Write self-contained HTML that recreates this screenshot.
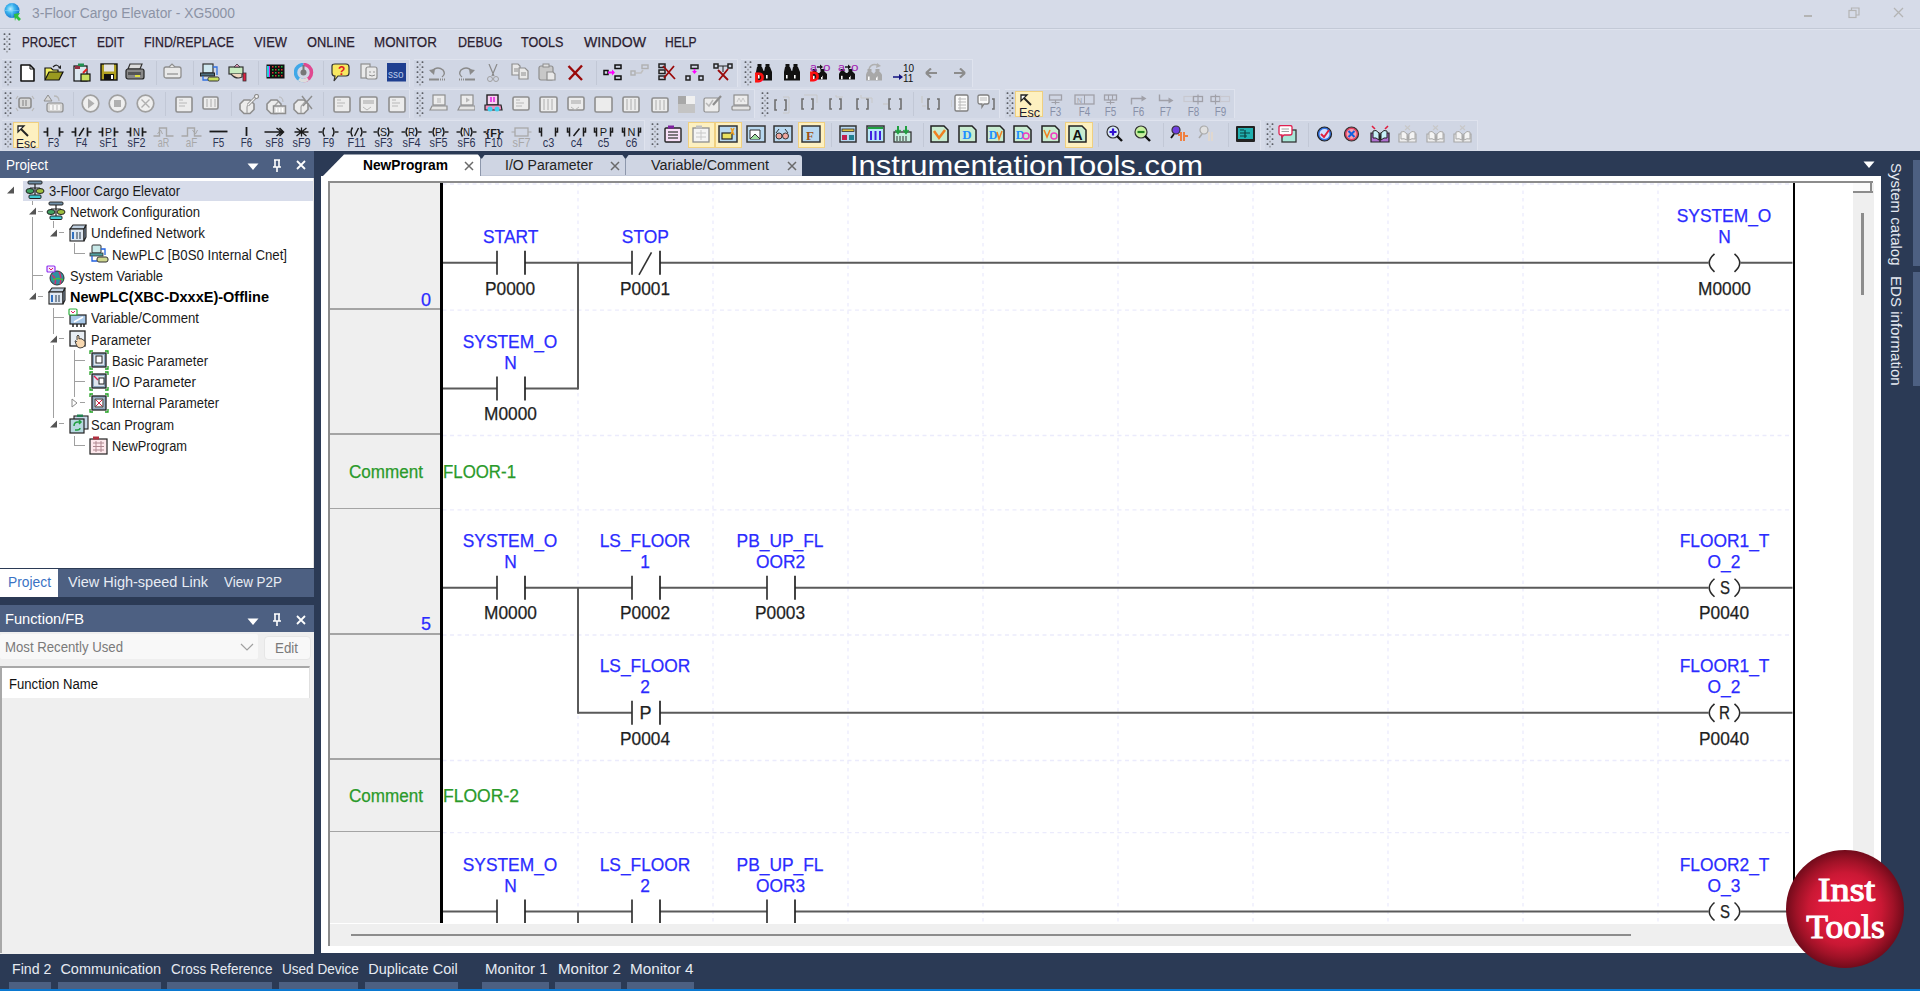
<!DOCTYPE html><html><head><meta charset="utf-8"><style>html,body{margin:0;padding:0}body{width:1920px;height:991px;position:relative;overflow:hidden;background:#d6dbe8;font-family:"Liberation Sans",sans-serif}body>div{position:absolute}</style></head><body>
<svg style="position:absolute;left:3px;top:1px;" width="19" height="21" viewBox="0 0 19 21"><defs><radialGradient id="gl" cx="40%" cy="40%" r="60%"><stop offset="0" stop-color="#bff0ff"/><stop offset="0.45" stop-color="#40b8f0"/><stop offset="1" stop-color="#1878d0"/></radialGradient></defs><circle cx="9" cy="9.5" r="7.5" fill="url(#gl)"/><path d="M9 2 V17 M2 9.5 H16" stroke="#8fd8ff" stroke-width="0.8" opacity="0.6"/><path d="M11 13 L17 12 L15 15 L18 18 L16 20 L13 17 L12 20 Z" fill="#30c040"/></svg>
<div style="left:32.00px;top:5.95px;font-size:14px;line-height:14px;color:#8c93a5;font-weight:normal;font-family:'Liberation Sans',sans-serif;white-space:nowrap;transform:scaleX(0.9882);transform-origin:0 0;">3-Floor Cargo Elevator - XG5000</div>
<div style="left:0px;top:28px;width:1920px;height:1px;background:#c3c9d6;"></div>
<div style="left:0px;top:29px;width:1920px;height:1px;background:#dfe3ee;"></div>
<div style="left:1804px;top:15px;width:8px;height:1.5px;background:#b4b4b4;"></div>
<svg style="position:absolute;left:1848px;top:7px;" width="12" height="12" viewBox="0 0 12 12"><rect x="1" y="3.5" width="7" height="7" fill="none" stroke="#b4b4b4" stroke-width="1.2"/><path d="M3.5 3.5 V1 H11 V8 H8" fill="none" stroke="#b4b4b4" stroke-width="1.2"/></svg>
<svg style="position:absolute;left:1893px;top:7px;" width="11" height="11" viewBox="0 0 11 11"><path d="M1 1 L10 10 M10 1 L1 10" stroke="#b4b4b4" stroke-width="1.3"/></svg>
<svg style="position:absolute;left:3.4px;top:32px;" width="8" height="22" viewBox="0 0 8 22"><rect x="0.6" y="1.3" width="1.8" height="1.8" rx="0.5" fill="#5c5f66"/><rect x="5.6" y="1.3" width="1.8" height="1.8" rx="0.5" fill="#5c5f66"/><rect x="3.1" y="3.8" width="1.8" height="1.8" rx="0.5" fill="#9c9fa6"/><rect x="0.6" y="6.3" width="1.8" height="1.8" rx="0.5" fill="#5c5f66"/><rect x="5.6" y="6.3" width="1.8" height="1.8" rx="0.5" fill="#5c5f66"/><rect x="3.1" y="8.8" width="1.8" height="1.8" rx="0.5" fill="#9c9fa6"/><rect x="0.6" y="11.3" width="1.8" height="1.8" rx="0.5" fill="#5c5f66"/><rect x="5.6" y="11.3" width="1.8" height="1.8" rx="0.5" fill="#5c5f66"/><rect x="3.1" y="13.8" width="1.8" height="1.8" rx="0.5" fill="#9c9fa6"/><rect x="0.6" y="16.3" width="1.8" height="1.8" rx="0.5" fill="#5c5f66"/><rect x="5.6" y="16.3" width="1.8" height="1.8" rx="0.5" fill="#5c5f66"/><rect x="3.1" y="18.8" width="1.8" height="1.8" rx="0.5" fill="#9c9fa6"/></svg>
<div style="left:21.60px;top:34.18px;font-size:15.5px;line-height:15.5px;color:#2b2030;font-weight:normal;font-family:'Liberation Sans',sans-serif;white-space:nowrap;transform:scaleX(0.7561);transform-origin:0 0;-webkit-text-stroke:0.25px currentColor;">PROJECT</div>
<div style="left:96.60px;top:34.18px;font-size:15.5px;line-height:15.5px;color:#2b2030;font-weight:normal;font-family:'Liberation Sans',sans-serif;white-space:nowrap;transform:scaleX(0.7704);transform-origin:0 0;-webkit-text-stroke:0.25px currentColor;">EDIT</div>
<div style="left:144.40px;top:34.18px;font-size:15.5px;line-height:15.5px;color:#2b2030;font-weight:normal;font-family:'Liberation Sans',sans-serif;white-space:nowrap;transform:scaleX(0.7976);transform-origin:0 0;-webkit-text-stroke:0.25px currentColor;">FIND/REPLACE</div>
<div style="left:254.00px;top:34.18px;font-size:15.5px;line-height:15.5px;color:#2b2030;font-weight:normal;font-family:'Liberation Sans',sans-serif;white-space:nowrap;transform:scaleX(0.8331);transform-origin:0 0;-webkit-text-stroke:0.25px currentColor;">VIEW</div>
<div style="left:306.60px;top:34.18px;font-size:15.5px;line-height:15.5px;color:#2b2030;font-weight:normal;font-family:'Liberation Sans',sans-serif;white-space:nowrap;transform:scaleX(0.8283);transform-origin:0 0;-webkit-text-stroke:0.25px currentColor;">ONLINE</div>
<div style="left:374.00px;top:34.18px;font-size:15.5px;line-height:15.5px;color:#2b2030;font-weight:normal;font-family:'Liberation Sans',sans-serif;white-space:nowrap;transform:scaleX(0.8627);transform-origin:0 0;-webkit-text-stroke:0.25px currentColor;">MONITOR</div>
<div style="left:457.50px;top:34.18px;font-size:15.5px;line-height:15.5px;color:#2b2030;font-weight:normal;font-family:'Liberation Sans',sans-serif;white-space:nowrap;transform:scaleX(0.8073);transform-origin:0 0;-webkit-text-stroke:0.25px currentColor;">DEBUG</div>
<div style="left:521.00px;top:34.18px;font-size:15.5px;line-height:15.5px;color:#2b2030;font-weight:normal;font-family:'Liberation Sans',sans-serif;white-space:nowrap;transform:scaleX(0.8113);transform-origin:0 0;-webkit-text-stroke:0.25px currentColor;">TOOLS</div>
<div style="left:584.00px;top:34.18px;font-size:15.5px;line-height:15.5px;color:#2b2030;font-weight:normal;font-family:'Liberation Sans',sans-serif;white-space:nowrap;transform:scaleX(0.9116);transform-origin:0 0;-webkit-text-stroke:0.25px currentColor;">WINDOW</div>
<div style="left:665.00px;top:34.18px;font-size:15.5px;line-height:15.5px;color:#2b2030;font-weight:normal;font-family:'Liberation Sans',sans-serif;white-space:nowrap;transform:scaleX(0.7804);transform-origin:0 0;-webkit-text-stroke:0.25px currentColor;">HELP</div>
<div style="left:2px;top:58.7px;width:408px;height:28.3px;background:#d0d6e4;border-top:1px solid #dfe3ee;border-right:1px solid #dfe3ee;box-sizing:border-box;"></div>
<div style="left:414px;top:58.7px;width:323.5px;height:28.3px;background:#d0d6e4;border-top:1px solid #dfe3ee;border-right:1px solid #dfe3ee;box-sizing:border-box;"></div>
<div style="left:741px;top:58.7px;width:232px;height:28.3px;background:#d0d6e4;border-top:1px solid #dfe3ee;border-right:1px solid #dfe3ee;box-sizing:border-box;"></div>
<div style="left:2px;top:89px;width:408px;height:29px;background:#d0d6e4;border-top:1px solid #dfe3ee;border-right:1px solid #dfe3ee;box-sizing:border-box;"></div>
<div style="left:414px;top:89px;width:341.29999999999995px;height:29px;background:#d0d6e4;border-top:1px solid #dfe3ee;border-right:1px solid #dfe3ee;box-sizing:border-box;"></div>
<div style="left:760px;top:89px;width:240px;height:29px;background:#d0d6e4;border-top:1px solid #dfe3ee;border-right:1px solid #dfe3ee;box-sizing:border-box;"></div>
<div style="left:1005px;top:89px;width:230px;height:29px;background:#d0d6e4;border-top:1px solid #dfe3ee;border-right:1px solid #dfe3ee;box-sizing:border-box;"></div>
<div style="left:2px;top:120.3px;width:643px;height:29.7px;background:#d0d6e4;border-top:1px solid #dfe3ee;border-right:1px solid #dfe3ee;box-sizing:border-box;"></div>
<div style="left:650px;top:120.3px;width:610.5px;height:29.7px;background:#d0d6e4;border-top:1px solid #dfe3ee;border-right:1px solid #dfe3ee;box-sizing:border-box;"></div>
<div style="left:1265px;top:120.3px;width:213.4000000000001px;height:29.7px;background:#d0d6e4;border-top:1px solid #dfe3ee;border-right:1px solid #dfe3ee;box-sizing:border-box;"></div>
<svg style="position:absolute;left:3.5px;top:60px;" width="8" height="26" viewBox="0 0 8 26"><rect x="0.6" y="1.3" width="1.8" height="1.8" rx="0.5" fill="#5c5f66"/><rect x="5.6" y="1.3" width="1.8" height="1.8" rx="0.5" fill="#5c5f66"/><rect x="3.1" y="3.8" width="1.8" height="1.8" rx="0.5" fill="#9c9fa6"/><rect x="0.6" y="6.3" width="1.8" height="1.8" rx="0.5" fill="#5c5f66"/><rect x="5.6" y="6.3" width="1.8" height="1.8" rx="0.5" fill="#5c5f66"/><rect x="3.1" y="8.8" width="1.8" height="1.8" rx="0.5" fill="#9c9fa6"/><rect x="0.6" y="11.3" width="1.8" height="1.8" rx="0.5" fill="#5c5f66"/><rect x="5.6" y="11.3" width="1.8" height="1.8" rx="0.5" fill="#5c5f66"/><rect x="3.1" y="13.8" width="1.8" height="1.8" rx="0.5" fill="#9c9fa6"/><rect x="0.6" y="16.3" width="1.8" height="1.8" rx="0.5" fill="#5c5f66"/><rect x="5.6" y="16.3" width="1.8" height="1.8" rx="0.5" fill="#5c5f66"/><rect x="3.1" y="18.8" width="1.8" height="1.8" rx="0.5" fill="#9c9fa6"/><rect x="0.6" y="21.3" width="1.8" height="1.8" rx="0.5" fill="#5c5f66"/><rect x="5.6" y="21.3" width="1.8" height="1.8" rx="0.5" fill="#5c5f66"/><rect x="3.1" y="23.8" width="1.8" height="1.8" rx="0.5" fill="#9c9fa6"/></svg>
<svg style="position:absolute;left:416px;top:60px;" width="8" height="26" viewBox="0 0 8 26"><rect x="0.6" y="1.3" width="1.8" height="1.8" rx="0.5" fill="#5c5f66"/><rect x="5.6" y="1.3" width="1.8" height="1.8" rx="0.5" fill="#5c5f66"/><rect x="3.1" y="3.8" width="1.8" height="1.8" rx="0.5" fill="#9c9fa6"/><rect x="0.6" y="6.3" width="1.8" height="1.8" rx="0.5" fill="#5c5f66"/><rect x="5.6" y="6.3" width="1.8" height="1.8" rx="0.5" fill="#5c5f66"/><rect x="3.1" y="8.8" width="1.8" height="1.8" rx="0.5" fill="#9c9fa6"/><rect x="0.6" y="11.3" width="1.8" height="1.8" rx="0.5" fill="#5c5f66"/><rect x="5.6" y="11.3" width="1.8" height="1.8" rx="0.5" fill="#5c5f66"/><rect x="3.1" y="13.8" width="1.8" height="1.8" rx="0.5" fill="#9c9fa6"/><rect x="0.6" y="16.3" width="1.8" height="1.8" rx="0.5" fill="#5c5f66"/><rect x="5.6" y="16.3" width="1.8" height="1.8" rx="0.5" fill="#5c5f66"/><rect x="3.1" y="18.8" width="1.8" height="1.8" rx="0.5" fill="#9c9fa6"/><rect x="0.6" y="21.3" width="1.8" height="1.8" rx="0.5" fill="#5c5f66"/><rect x="5.6" y="21.3" width="1.8" height="1.8" rx="0.5" fill="#5c5f66"/><rect x="3.1" y="23.8" width="1.8" height="1.8" rx="0.5" fill="#9c9fa6"/></svg>
<svg style="position:absolute;left:743.5px;top:60px;" width="8" height="26" viewBox="0 0 8 26"><rect x="0.6" y="1.3" width="1.8" height="1.8" rx="0.5" fill="#5c5f66"/><rect x="5.6" y="1.3" width="1.8" height="1.8" rx="0.5" fill="#5c5f66"/><rect x="3.1" y="3.8" width="1.8" height="1.8" rx="0.5" fill="#9c9fa6"/><rect x="0.6" y="6.3" width="1.8" height="1.8" rx="0.5" fill="#5c5f66"/><rect x="5.6" y="6.3" width="1.8" height="1.8" rx="0.5" fill="#5c5f66"/><rect x="3.1" y="8.8" width="1.8" height="1.8" rx="0.5" fill="#9c9fa6"/><rect x="0.6" y="11.3" width="1.8" height="1.8" rx="0.5" fill="#5c5f66"/><rect x="5.6" y="11.3" width="1.8" height="1.8" rx="0.5" fill="#5c5f66"/><rect x="3.1" y="13.8" width="1.8" height="1.8" rx="0.5" fill="#9c9fa6"/><rect x="0.6" y="16.3" width="1.8" height="1.8" rx="0.5" fill="#5c5f66"/><rect x="5.6" y="16.3" width="1.8" height="1.8" rx="0.5" fill="#5c5f66"/><rect x="3.1" y="18.8" width="1.8" height="1.8" rx="0.5" fill="#9c9fa6"/><rect x="0.6" y="21.3" width="1.8" height="1.8" rx="0.5" fill="#5c5f66"/><rect x="5.6" y="21.3" width="1.8" height="1.8" rx="0.5" fill="#5c5f66"/><rect x="3.1" y="23.8" width="1.8" height="1.8" rx="0.5" fill="#9c9fa6"/></svg>
<svg style="position:absolute;left:3.5px;top:91px;" width="8" height="26" viewBox="0 0 8 26"><rect x="0.6" y="1.3" width="1.8" height="1.8" rx="0.5" fill="#5c5f66"/><rect x="5.6" y="1.3" width="1.8" height="1.8" rx="0.5" fill="#5c5f66"/><rect x="3.1" y="3.8" width="1.8" height="1.8" rx="0.5" fill="#9c9fa6"/><rect x="0.6" y="6.3" width="1.8" height="1.8" rx="0.5" fill="#5c5f66"/><rect x="5.6" y="6.3" width="1.8" height="1.8" rx="0.5" fill="#5c5f66"/><rect x="3.1" y="8.8" width="1.8" height="1.8" rx="0.5" fill="#9c9fa6"/><rect x="0.6" y="11.3" width="1.8" height="1.8" rx="0.5" fill="#5c5f66"/><rect x="5.6" y="11.3" width="1.8" height="1.8" rx="0.5" fill="#5c5f66"/><rect x="3.1" y="13.8" width="1.8" height="1.8" rx="0.5" fill="#9c9fa6"/><rect x="0.6" y="16.3" width="1.8" height="1.8" rx="0.5" fill="#5c5f66"/><rect x="5.6" y="16.3" width="1.8" height="1.8" rx="0.5" fill="#5c5f66"/><rect x="3.1" y="18.8" width="1.8" height="1.8" rx="0.5" fill="#9c9fa6"/><rect x="0.6" y="21.3" width="1.8" height="1.8" rx="0.5" fill="#5c5f66"/><rect x="5.6" y="21.3" width="1.8" height="1.8" rx="0.5" fill="#5c5f66"/><rect x="3.1" y="23.8" width="1.8" height="1.8" rx="0.5" fill="#9c9fa6"/></svg>
<svg style="position:absolute;left:416px;top:91px;" width="8" height="26" viewBox="0 0 8 26"><rect x="0.6" y="1.3" width="1.8" height="1.8" rx="0.5" fill="#5c5f66"/><rect x="5.6" y="1.3" width="1.8" height="1.8" rx="0.5" fill="#5c5f66"/><rect x="3.1" y="3.8" width="1.8" height="1.8" rx="0.5" fill="#9c9fa6"/><rect x="0.6" y="6.3" width="1.8" height="1.8" rx="0.5" fill="#5c5f66"/><rect x="5.6" y="6.3" width="1.8" height="1.8" rx="0.5" fill="#5c5f66"/><rect x="3.1" y="8.8" width="1.8" height="1.8" rx="0.5" fill="#9c9fa6"/><rect x="0.6" y="11.3" width="1.8" height="1.8" rx="0.5" fill="#5c5f66"/><rect x="5.6" y="11.3" width="1.8" height="1.8" rx="0.5" fill="#5c5f66"/><rect x="3.1" y="13.8" width="1.8" height="1.8" rx="0.5" fill="#9c9fa6"/><rect x="0.6" y="16.3" width="1.8" height="1.8" rx="0.5" fill="#5c5f66"/><rect x="5.6" y="16.3" width="1.8" height="1.8" rx="0.5" fill="#5c5f66"/><rect x="3.1" y="18.8" width="1.8" height="1.8" rx="0.5" fill="#9c9fa6"/><rect x="0.6" y="21.3" width="1.8" height="1.8" rx="0.5" fill="#5c5f66"/><rect x="5.6" y="21.3" width="1.8" height="1.8" rx="0.5" fill="#5c5f66"/><rect x="3.1" y="23.8" width="1.8" height="1.8" rx="0.5" fill="#9c9fa6"/></svg>
<svg style="position:absolute;left:761px;top:91px;" width="8" height="26" viewBox="0 0 8 26"><rect x="0.6" y="1.3" width="1.8" height="1.8" rx="0.5" fill="#5c5f66"/><rect x="5.6" y="1.3" width="1.8" height="1.8" rx="0.5" fill="#5c5f66"/><rect x="3.1" y="3.8" width="1.8" height="1.8" rx="0.5" fill="#9c9fa6"/><rect x="0.6" y="6.3" width="1.8" height="1.8" rx="0.5" fill="#5c5f66"/><rect x="5.6" y="6.3" width="1.8" height="1.8" rx="0.5" fill="#5c5f66"/><rect x="3.1" y="8.8" width="1.8" height="1.8" rx="0.5" fill="#9c9fa6"/><rect x="0.6" y="11.3" width="1.8" height="1.8" rx="0.5" fill="#5c5f66"/><rect x="5.6" y="11.3" width="1.8" height="1.8" rx="0.5" fill="#5c5f66"/><rect x="3.1" y="13.8" width="1.8" height="1.8" rx="0.5" fill="#9c9fa6"/><rect x="0.6" y="16.3" width="1.8" height="1.8" rx="0.5" fill="#5c5f66"/><rect x="5.6" y="16.3" width="1.8" height="1.8" rx="0.5" fill="#5c5f66"/><rect x="3.1" y="18.8" width="1.8" height="1.8" rx="0.5" fill="#9c9fa6"/><rect x="0.6" y="21.3" width="1.8" height="1.8" rx="0.5" fill="#5c5f66"/><rect x="5.6" y="21.3" width="1.8" height="1.8" rx="0.5" fill="#5c5f66"/><rect x="3.1" y="23.8" width="1.8" height="1.8" rx="0.5" fill="#9c9fa6"/></svg>
<svg style="position:absolute;left:1005.5px;top:91px;" width="8" height="26" viewBox="0 0 8 26"><rect x="0.6" y="1.3" width="1.8" height="1.8" rx="0.5" fill="#5c5f66"/><rect x="5.6" y="1.3" width="1.8" height="1.8" rx="0.5" fill="#5c5f66"/><rect x="3.1" y="3.8" width="1.8" height="1.8" rx="0.5" fill="#9c9fa6"/><rect x="0.6" y="6.3" width="1.8" height="1.8" rx="0.5" fill="#5c5f66"/><rect x="5.6" y="6.3" width="1.8" height="1.8" rx="0.5" fill="#5c5f66"/><rect x="3.1" y="8.8" width="1.8" height="1.8" rx="0.5" fill="#9c9fa6"/><rect x="0.6" y="11.3" width="1.8" height="1.8" rx="0.5" fill="#5c5f66"/><rect x="5.6" y="11.3" width="1.8" height="1.8" rx="0.5" fill="#5c5f66"/><rect x="3.1" y="13.8" width="1.8" height="1.8" rx="0.5" fill="#9c9fa6"/><rect x="0.6" y="16.3" width="1.8" height="1.8" rx="0.5" fill="#5c5f66"/><rect x="5.6" y="16.3" width="1.8" height="1.8" rx="0.5" fill="#5c5f66"/><rect x="3.1" y="18.8" width="1.8" height="1.8" rx="0.5" fill="#9c9fa6"/><rect x="0.6" y="21.3" width="1.8" height="1.8" rx="0.5" fill="#5c5f66"/><rect x="5.6" y="21.3" width="1.8" height="1.8" rx="0.5" fill="#5c5f66"/><rect x="3.1" y="23.8" width="1.8" height="1.8" rx="0.5" fill="#9c9fa6"/></svg>
<svg style="position:absolute;left:3.5px;top:122px;" width="8" height="26" viewBox="0 0 8 26"><rect x="0.6" y="1.3" width="1.8" height="1.8" rx="0.5" fill="#5c5f66"/><rect x="5.6" y="1.3" width="1.8" height="1.8" rx="0.5" fill="#5c5f66"/><rect x="3.1" y="3.8" width="1.8" height="1.8" rx="0.5" fill="#9c9fa6"/><rect x="0.6" y="6.3" width="1.8" height="1.8" rx="0.5" fill="#5c5f66"/><rect x="5.6" y="6.3" width="1.8" height="1.8" rx="0.5" fill="#5c5f66"/><rect x="3.1" y="8.8" width="1.8" height="1.8" rx="0.5" fill="#9c9fa6"/><rect x="0.6" y="11.3" width="1.8" height="1.8" rx="0.5" fill="#5c5f66"/><rect x="5.6" y="11.3" width="1.8" height="1.8" rx="0.5" fill="#5c5f66"/><rect x="3.1" y="13.8" width="1.8" height="1.8" rx="0.5" fill="#9c9fa6"/><rect x="0.6" y="16.3" width="1.8" height="1.8" rx="0.5" fill="#5c5f66"/><rect x="5.6" y="16.3" width="1.8" height="1.8" rx="0.5" fill="#5c5f66"/><rect x="3.1" y="18.8" width="1.8" height="1.8" rx="0.5" fill="#9c9fa6"/><rect x="0.6" y="21.3" width="1.8" height="1.8" rx="0.5" fill="#5c5f66"/><rect x="5.6" y="21.3" width="1.8" height="1.8" rx="0.5" fill="#5c5f66"/><rect x="3.1" y="23.8" width="1.8" height="1.8" rx="0.5" fill="#9c9fa6"/></svg>
<svg style="position:absolute;left:651px;top:122px;" width="8" height="26" viewBox="0 0 8 26"><rect x="0.6" y="1.3" width="1.8" height="1.8" rx="0.5" fill="#5c5f66"/><rect x="5.6" y="1.3" width="1.8" height="1.8" rx="0.5" fill="#5c5f66"/><rect x="3.1" y="3.8" width="1.8" height="1.8" rx="0.5" fill="#9c9fa6"/><rect x="0.6" y="6.3" width="1.8" height="1.8" rx="0.5" fill="#5c5f66"/><rect x="5.6" y="6.3" width="1.8" height="1.8" rx="0.5" fill="#5c5f66"/><rect x="3.1" y="8.8" width="1.8" height="1.8" rx="0.5" fill="#9c9fa6"/><rect x="0.6" y="11.3" width="1.8" height="1.8" rx="0.5" fill="#5c5f66"/><rect x="5.6" y="11.3" width="1.8" height="1.8" rx="0.5" fill="#5c5f66"/><rect x="3.1" y="13.8" width="1.8" height="1.8" rx="0.5" fill="#9c9fa6"/><rect x="0.6" y="16.3" width="1.8" height="1.8" rx="0.5" fill="#5c5f66"/><rect x="5.6" y="16.3" width="1.8" height="1.8" rx="0.5" fill="#5c5f66"/><rect x="3.1" y="18.8" width="1.8" height="1.8" rx="0.5" fill="#9c9fa6"/><rect x="0.6" y="21.3" width="1.8" height="1.8" rx="0.5" fill="#5c5f66"/><rect x="5.6" y="21.3" width="1.8" height="1.8" rx="0.5" fill="#5c5f66"/><rect x="3.1" y="23.8" width="1.8" height="1.8" rx="0.5" fill="#9c9fa6"/></svg>
<svg style="position:absolute;left:1266px;top:122px;" width="8" height="26" viewBox="0 0 8 26"><rect x="0.6" y="1.3" width="1.8" height="1.8" rx="0.5" fill="#5c5f66"/><rect x="5.6" y="1.3" width="1.8" height="1.8" rx="0.5" fill="#5c5f66"/><rect x="3.1" y="3.8" width="1.8" height="1.8" rx="0.5" fill="#9c9fa6"/><rect x="0.6" y="6.3" width="1.8" height="1.8" rx="0.5" fill="#5c5f66"/><rect x="5.6" y="6.3" width="1.8" height="1.8" rx="0.5" fill="#5c5f66"/><rect x="3.1" y="8.8" width="1.8" height="1.8" rx="0.5" fill="#9c9fa6"/><rect x="0.6" y="11.3" width="1.8" height="1.8" rx="0.5" fill="#5c5f66"/><rect x="5.6" y="11.3" width="1.8" height="1.8" rx="0.5" fill="#5c5f66"/><rect x="3.1" y="13.8" width="1.8" height="1.8" rx="0.5" fill="#9c9fa6"/><rect x="0.6" y="16.3" width="1.8" height="1.8" rx="0.5" fill="#5c5f66"/><rect x="5.6" y="16.3" width="1.8" height="1.8" rx="0.5" fill="#5c5f66"/><rect x="3.1" y="18.8" width="1.8" height="1.8" rx="0.5" fill="#9c9fa6"/><rect x="0.6" y="21.3" width="1.8" height="1.8" rx="0.5" fill="#5c5f66"/><rect x="5.6" y="21.3" width="1.8" height="1.8" rx="0.5" fill="#5c5f66"/><rect x="3.1" y="23.8" width="1.8" height="1.8" rx="0.5" fill="#9c9fa6"/></svg>
<div style="left:155.6px;top:61px;width:1px;height:24px;background:#c2c8d6;"></div>
<div style="left:193px;top:61px;width:1px;height:24px;background:#c2c8d6;"></div>
<div style="left:258.3px;top:61px;width:1px;height:24px;background:#c2c8d6;"></div>
<div style="left:323px;top:61px;width:1px;height:24px;background:#c2c8d6;"></div>
<div style="left:595.6px;top:61px;width:1px;height:24px;background:#c2c8d6;"></div>
<div style="left:73.1px;top:92px;width:1px;height:24px;background:#c2c8d6;"></div>
<div style="left:165.4px;top:92px;width:1px;height:24px;background:#c2c8d6;"></div>
<div style="left:230.7px;top:92px;width:1px;height:24px;background:#c2c8d6;"></div>
<div style="left:323px;top:92px;width:1px;height:24px;background:#c2c8d6;"></div>
<div style="left:913.2px;top:92px;width:1px;height:24px;background:#c2c8d6;"></div>
<div style="left:830.7px;top:123px;width:1px;height:24px;background:#c2c8d6;"></div>
<div style="left:923.1px;top:123px;width:1px;height:24px;background:#c2c8d6;"></div>
<div style="left:1098px;top:123px;width:1px;height:24px;background:#c2c8d6;"></div>
<div style="left:1162.9px;top:123px;width:1px;height:24px;background:#c2c8d6;"></div>
<div style="left:1228.1px;top:123px;width:1px;height:24px;background:#c2c8d6;"></div>
<div style="left:1307.8px;top:123px;width:1px;height:24px;background:#c2c8d6;"></div>
<svg style="position:absolute;left:19.7px;top:63.5px;" width="15" height="18" viewBox="0 0 15 18"><path d="M1 1 H10 L14 5 V17 H1 Z" fill="#fff" stroke="#111" stroke-width="1.6" stroke-linejoin="round"/><path d="M10 1 V5 H14" fill="none" stroke="#111" stroke-width="1"/></svg>
<svg style="position:absolute;left:44.4px;top:62.5px;" width="20" height="19" viewBox="0 0 20 19"><path d="M1 5 H7 L9 7 H14 V16 H1 Z" fill="#f2f060" stroke="#111" stroke-width="1.2"/><path d="M1 17 L5 9 H19 L15 17 Z" fill="#9a9a20" stroke="#111" stroke-width="1.2"/><path d="M9 4 Q13 0 16 5" stroke="#222" fill="none" stroke-width="1.2"/><path d="M14 5 L17 6 L17 2" fill="#222"/></svg>
<svg style="position:absolute;left:73.4px;top:62.5px;" width="18" height="19" viewBox="0 0 18 19"><rect x="1" y="3" width="13" height="15" fill="#dce8f0" stroke="#111" stroke-width="1.2"/><rect x="5" y="0.5" width="6" height="3" fill="#209050"/><rect x="2" y="3" width="5" height="3" fill="#903040"/><path d="M10 10 L14 6" stroke="#e02020" stroke-width="2"/><rect x="8" y="11" width="9" height="7" fill="#c8e060" stroke="#111" stroke-width="1.2"/></svg>
<svg style="position:absolute;left:99.6px;top:63.0px;" width="18" height="18" viewBox="0 0 18 18"><rect x="1" y="1" width="16" height="16" fill="#b0a020" stroke="#111" stroke-width="1.4"/><rect x="4" y="1.5" width="10" height="7" fill="#e4e4e4"/><rect x="4" y="11" width="10" height="6" fill="#111"/><rect x="11" y="12" width="2" height="4" fill="#fff"/></svg>
<svg style="position:absolute;left:125.3px;top:62.5px;" width="21" height="19" viewBox="0 0 21 19"><path d="M5 1 H17 L15 6 H3 Z" fill="#ddd" stroke="#333" stroke-width="1.2"/><rect x="1" y="6" width="18" height="10" rx="2" fill="#888" stroke="#222" stroke-width="1.2"/><rect x="3" y="9" width="13" height="3" fill="#555"/><rect x="10" y="12" width="5" height="2" fill="#e0e040"/></svg>
<svg style="position:absolute;left:163.1px;top:62.5px;" width="20" height="18" viewBox="0 0 20 18"><rect x="1" y="4" width="17" height="11" rx="2" fill="#e9e9e9" stroke="#8e8e8e" stroke-width="1.3"/><path d="M6 4 L9 1 L12 4" fill="#e9e9e9" stroke="#8e8e8e" stroke-width="1.2"/><path d="M4 11 H15" stroke="#8e8e8e" stroke-width="1.2"/></svg>
<svg style="position:absolute;left:200.3px;top:62.5px;" width="20" height="19" viewBox="0 0 20 19"><rect x="3" y="1" width="10" height="9" fill="#cfe8f0" stroke="#333" stroke-width="1.2"/><rect x="0.5" y="10" width="14" height="3" fill="#507080" stroke="#222" stroke-width="1"/><path d="M3 13 V17 H8 M13 4 H17 V12" stroke="#3070e0" stroke-width="1.3" fill="none"/><rect x="8" y="14" width="11" height="4" rx="1.5" fill="#c8e060" stroke="#333" stroke-width="1"/></svg>
<svg style="position:absolute;left:227.8px;top:62.5px;" width="20" height="19" viewBox="0 0 20 19"><rect x="1" y="4" width="14" height="7" fill="#c8ecc0" stroke="#333" stroke-width="1.2"/><path d="M6 4 L9 1 L12 4 Z" fill="#e8a0c0" stroke="#333" stroke-width="0.8"/><path d="M3 11 Q8 17 14 14 V11" fill="#f0d8c0" stroke="#333" stroke-width="1.2"/><rect x="15" y="10" width="3" height="8" fill="#e02040" stroke="#333" stroke-width="0.8"/></svg>
<svg style="position:absolute;left:265.5px;top:63.5px;" width="20" height="16" viewBox="0 0 20 16"><rect x="0.5" y="0.5" width="18" height="14" fill="#111"/><rect x="1" y="2" width="3" height="11" fill="#20d0e0"/><rect x="3" y="2" width="1" height="11" fill="#e020e0"/><rect x="6" y="2" width="1.5" height="1.5" fill="#e03030"/><rect x="6" y="5" width="1.5" height="1.5" fill="#20c040"/><rect x="6" y="8" width="1.5" height="1.5" fill="#e03030"/><rect x="6" y="11" width="1.5" height="1.5" fill="#20c040"/><rect x="9" y="2" width="1.5" height="1.5" fill="#20c040"/><rect x="9" y="5" width="1.5" height="1.5" fill="#e03030"/><rect x="9" y="8" width="1.5" height="1.5" fill="#20c040"/><rect x="9" y="11" width="1.5" height="1.5" fill="#e03030"/><rect x="12" y="2" width="1.5" height="1.5" fill="#e03030"/><rect x="12" y="5" width="1.5" height="1.5" fill="#20c040"/><rect x="12" y="8" width="1.5" height="1.5" fill="#e03030"/><rect x="12" y="11" width="1.5" height="1.5" fill="#20c040"/><rect x="15" y="2" width="1.5" height="1.5" fill="#20c040"/><rect x="15" y="5" width="1.5" height="1.5" fill="#e03030"/><rect x="15" y="8" width="1.5" height="1.5" fill="#20c040"/><rect x="15" y="11" width="1.5" height="1.5" fill="#e03030"/></svg>
<svg style="position:absolute;left:293.7px;top:62.5px;" width="20" height="20" viewBox="0 0 20 20"><path d="M9.5 1.5 A8 8 0 0 0 9.5 17.5" stroke="#40a8e8" stroke-width="3.5" fill="none"/><path d="M9.5 1.5 A8 8 0 0 1 9.5 17.5" stroke="#e04890" stroke-width="3.5" fill="none"/><path d="M5 16 A8 8 0 0 0 14 16" stroke="#ddd" stroke-width="3.5" fill="none"/><circle cx="9.5" cy="9.5" r="3" fill="#777"/><rect x="8.5" y="2" width="2" height="6" fill="#777"/></svg>
<svg style="position:absolute;left:330.2px;top:62.5px;" width="20" height="20" viewBox="0 0 20 20"><path d="M2 3 Q2 1 5 1 H16 Q19 1 19 4 V10 Q19 13 16 13 H8 L4 18 L5 13 Q2 13 2 10 Z" fill="#f8e860" stroke="#333" stroke-width="1.2"/><text x="8" y="11.5" font-size="12" font-family="Liberation Sans" fill="#e02020" font-weight="bold">?</text></svg>
<svg style="position:absolute;left:359.5px;top:62.5px;" width="20" height="20" viewBox="0 0 20 20"><rect x="1" y="1" width="9" height="14" fill="#e9e9e9" stroke="#8e8e8e" stroke-width="1.2"/><rect x="6" y="4" width="11" height="12" rx="2" fill="#e9e9e9" stroke="#8e8e8e" stroke-width="1.2"/><circle cx="10" cy="9" r="0.8" fill="#8e8e8e"/><circle cx="14" cy="9" r="0.8" fill="#8e8e8e"/><path d="M9 12 Q12 14 15 12" stroke="#8e8e8e" fill="none"/></svg>
<svg style="position:absolute;left:386.5px;top:62.9px;" width="20" height="20" viewBox="0 0 20 20"><rect x="0" y="0" width="19" height="18.5" fill="#1f3f90"/><text x="1" y="15" font-size="10" font-family="Liberation Sans" fill="#b8c8e8">sso</text></svg>
<svg style="position:absolute;left:428.1px;top:65.1px;" width="20" height="16" viewBox="0 0 20 16"><path d="M3 7 Q9 0 15 5 Q18 9 14 12" stroke="#8a8a8a" stroke-width="1.4" fill="none"/><path d="M1 5 L6 10 L7 4 Z" fill="#8a8a8a"/><rect x="1" y="13.5" width="10" height="2" fill="#8a8a8a"/><rect x="12" y="13.5" width="1" height="2" fill="#8a8a8a"/><rect x="14" y="13.5" width="1" height="2" fill="#8a8a8a"/><rect x="16" y="13.5" width="1" height="2" fill="#8a8a8a"/></svg>
<svg style="position:absolute;left:456.2px;top:65.1px;" width="20" height="16" viewBox="0 0 20 16"><g transform="translate(20,0) scale(-1,1)"><path d="M3 7 Q9 0 15 5 Q18 9 14 12" stroke="#8a8a8a" stroke-width="1.4" fill="none"/><path d="M1 5 L6 10 L7 4 Z" fill="#8a8a8a"/><rect x="1" y="13.5" width="10" height="2" fill="#8a8a8a"/><rect x="12" y="13.5" width="1" height="2" fill="#8a8a8a"/><rect x="14" y="13.5" width="1" height="2" fill="#8a8a8a"/><rect x="16" y="13.5" width="1" height="2" fill="#8a8a8a"/></g></svg>
<svg style="position:absolute;left:486.7px;top:63.5px;" width="12" height="19" viewBox="0 0 12 19"><path d="M2 0 L7 12 M10 0 L5 12" stroke="#8a8a8a" stroke-width="1.2"/><circle cx="3" cy="15" r="2.5" fill="none" stroke="#a0a0a0" stroke-width="1"/><circle cx="9" cy="15" r="2.5" fill="none" stroke="#a0a0a0" stroke-width="1"/></svg>
<svg style="position:absolute;left:510.7px;top:63.0px;" width="20" height="18" viewBox="0 0 20 18"><path d="M1 1 H7 L9 3 V12 H1 Z" fill="#e9e9e9" stroke="#8e8e8e" stroke-width="1.2"/><path d="M8 5 H14 L17 8 V16 H8 Z" fill="#e9e9e9" stroke="#8e8e8e" stroke-width="1.2"/><path d="M10 10 H15 M10 12 H15 M3 6 H7 M3 8 H7" stroke="#8e8e8e"/></svg>
<svg style="position:absolute;left:538.2px;top:62.5px;" width="20" height="19" viewBox="0 0 20 19"><rect x="1" y="3" width="14" height="14" rx="2" fill="#c8c8c8" stroke="#8e8e8e" stroke-width="1.2"/><rect x="5" y="1" width="6" height="3" fill="#e0e0e0" stroke="#8e8e8e"/><path d="M9 9 H15 L17 11 V17 H9 Z" fill="#e9e9e9" stroke="#8e8e8e" stroke-width="1.2"/></svg>
<svg style="position:absolute;left:567.0px;top:64.0px;" width="17" height="18" viewBox="0 0 17 18"><path d="M1.5 2 L15 16 M15 1.5 L2 15.5" stroke="#9a0a0a" stroke-width="2.4"/></svg>
<svg style="position:absolute;left:602.9px;top:63.5px;" width="20" height="18" viewBox="0 0 20 18"><rect x="1" y="6.5" width="4" height="4" fill="none" stroke="#111" stroke-width="1.5"/><rect x="12" y="1" width="6" height="3.5" fill="none" stroke="#111" stroke-width="1.5"/><rect x="12" y="12" width="6" height="3.5" fill="none" stroke="#111" stroke-width="1.5"/><path d="M5 8.5 H11" stroke="#ff00ff" stroke-width="2"/><path d="M9 5.5 L12 8.5 L9 11.5 Z" fill="#ff00ff"/></svg>
<svg style="position:absolute;left:630.3px;top:63.5px;" width="20" height="18" viewBox="0 0 20 18"><rect x="1" y="7" width="4" height="4" fill="none" stroke="#b0b0b0" stroke-width="1.4"/><rect x="12" y="1" width="6" height="3.5" fill="none" stroke="#b0b0b0" stroke-width="1.4"/><path d="M6 9 H11 L13 6" stroke="#c0c0c0" stroke-width="1.6" fill="none"/></svg>
<svg style="position:absolute;left:657.8px;top:62.5px;" width="19" height="19" viewBox="0 0 19 19"><rect x="1" y="1" width="6" height="3.5" fill="none" stroke="#222" stroke-width="1.5"/><rect x="1" y="7" width="6" height="3.5" fill="#ddd" stroke="#222" stroke-width="1.5"/><rect x="1" y="13" width="6" height="3.5" fill="none" stroke="#222" stroke-width="1.5"/><path d="M5 3 L17 16 M16 3 L6 15" stroke="#9a0a0a" stroke-width="1.8"/></svg>
<svg style="position:absolute;left:685.4px;top:63.5px;" width="20" height="18" viewBox="0 0 20 18"><rect x="6" y="1" width="7" height="3.5" fill="none" stroke="#222" stroke-width="1.5"/><rect x="1" y="12" width="4" height="4" fill="none" stroke="#222" stroke-width="1.5"/><rect x="14" y="12" width="4" height="4" fill="none" stroke="#222" stroke-width="1.5"/><path d="M9.5 5 V9" stroke="#ff00ff" stroke-width="1.6"/><path d="M7 7 L9.5 10 L12 7 Z" fill="#ff00ff"/></svg>
<svg style="position:absolute;left:712.9px;top:62.5px;" width="21" height="19" viewBox="0 0 21 19"><rect x="1" y="1" width="4" height="4" fill="none" stroke="#222" stroke-width="1.5"/><rect x="15" y="1" width="4" height="4" fill="none" stroke="#222" stroke-width="1.5"/><path d="M5 3 H15 M10 3 V9" stroke="#222" stroke-width="1"/><path d="M5 7 L15 17 M15 6 L6 17" stroke="#9a0a0a" stroke-width="1.8"/></svg>
<svg style="position:absolute;left:754.5px;top:62.5px;" width="21" height="20" viewBox="0 0 21 20"><rect x="2.5" y="1" width="4" height="3" fill="#111"/><path d="M2 4 H7 L9 9.0 V17.5 H1 V9.0 Z" fill="#111"/><rect x="3" y="12.0" width="1.6" height="3.5" fill="#fff"/><rect x="10.5" y="1" width="4" height="3" fill="#111"/><path d="M10 4 H15 L17 9.0 V17.5 H9 V9.0 Z" fill="#111"/><rect x="11" y="12.0" width="1.6" height="3.5" fill="#fff"/><rect x="6" y="8.0" width="6" height="4" fill="#111"/><text x="-0.5" y="18.5" font-size="12.5" font-weight="bold" font-family="Liberation Sans" fill="#ff1010" stroke="#ff1010" stroke-width="0.8">D</text></svg>
<svg style="position:absolute;left:782.5px;top:62.5px;" width="21" height="20" viewBox="0 0 21 20"><rect x="2.5" y="1" width="4" height="3" fill="#111"/><path d="M2 4 H7 L9 9.0 V17.5 H1 V9.0 Z" fill="#111"/><rect x="3" y="12.0" width="1.6" height="3.5" fill="#fff"/><rect x="10.5" y="1" width="4" height="3" fill="#111"/><path d="M10 4 H15 L17 9.0 V17.5 H9 V9.0 Z" fill="#111"/><rect x="11" y="12.0" width="1.6" height="3.5" fill="#fff"/><rect x="6" y="8.0" width="6" height="4" fill="#111"/></svg>
<svg style="position:absolute;left:809.5px;top:61.5px;" width="21" height="21" viewBox="0 0 21 21"><rect x="2.5" y="7" width="4" height="3" fill="#111"/><path d="M2 10 H7 L9 12.0 V17.5 H1 V12.0 Z" fill="#111"/><rect x="3" y="13.8" width="1.6" height="3.5" fill="#fff"/><rect x="10.5" y="7" width="4" height="3" fill="#111"/><path d="M10 10 H15 L17 12.0 V17.5 H9 V12.0 Z" fill="#111"/><rect x="11" y="13.8" width="1.6" height="3.5" fill="#fff"/><rect x="6" y="11.0" width="6" height="4" fill="#111"/><text x="-0.5" y="18.5" font-size="12.5" font-weight="bold" font-family="Liberation Sans" fill="#ff1010" stroke="#ff1010" stroke-width="0.8">D</text><text x="0" y="8.5" font-size="11" font-family="Liberation Sans" fill="#a020b0" textLength="7" lengthAdjust="spacingAndGlyphs">a</text><text x="13" y="8.5" font-size="11" font-family="Liberation Sans" fill="#a020b0" textLength="7.5" lengthAdjust="spacingAndGlyphs">o</text><path d="M7 5 H11" stroke="#111" stroke-width="1.4"/><path d="M10 2.5 L13 5 L10 7.5Z" fill="#111"/></svg>
<svg style="position:absolute;left:837.5px;top:61.5px;" width="22" height="21" viewBox="0 0 22 21"><rect x="2.5" y="7" width="4" height="3" fill="#111"/><path d="M2 10 H7 L9 12.0 V17.5 H1 V12.0 Z" fill="#111"/><rect x="3" y="13.8" width="1.6" height="3.5" fill="#fff"/><rect x="10.5" y="7" width="4" height="3" fill="#111"/><path d="M10 10 H15 L17 12.0 V17.5 H9 V12.0 Z" fill="#111"/><rect x="11" y="13.8" width="1.6" height="3.5" fill="#fff"/><rect x="6" y="11.0" width="6" height="4" fill="#111"/><text x="0" y="8.5" font-size="11" font-family="Liberation Sans" fill="#a020b0" textLength="7" lengthAdjust="spacingAndGlyphs">a</text><text x="13" y="8.5" font-size="11" font-family="Liberation Sans" fill="#a020b0" textLength="7.5" lengthAdjust="spacingAndGlyphs">o</text><path d="M7 5 H11" stroke="#111" stroke-width="1.4"/><path d="M10 2.5 L13 5 L10 7.5Z" fill="#111"/></svg>
<svg style="position:absolute;left:865.0px;top:62.5px;" width="20" height="20" viewBox="0 0 20 20"><rect x="2.5" y="6" width="4" height="3" fill="#a8a8a8"/><path d="M2 9 H7 L9 11.5 V17.5 H1 V11.5 Z" fill="#a8a8a8"/><rect x="3" y="13.5" width="1.6" height="3.5" fill="#fff"/><rect x="10.5" y="6" width="4" height="3" fill="#a8a8a8"/><path d="M10 9 H15 L17 11.5 V17.5 H9 V11.5 Z" fill="#a8a8a8"/><rect x="11" y="13.5" width="1.6" height="3.5" fill="#fff"/><rect x="6" y="10.5" width="6" height="4" fill="#a8a8a8"/><path d="M4 6 Q6 0 13 2" stroke="#b0b0b0" stroke-width="1.5" fill="none"/><path d="M12 0 L16 3 L11 5 Z" fill="#b0b0b0"/></svg>
<svg style="position:absolute;left:893.0px;top:62.5px;" width="22" height="20" viewBox="0 0 22 20"><text x="10" y="8.5" font-size="10" font-family="Liberation Sans" fill="#111">10</text><text x="10" y="18.5" font-size="10" font-family="Liberation Sans" fill="#111">11</text><path d="M0 14 H8" stroke="#101080" stroke-width="1.5"/><path d="M6 11 L10 14 L6 17 Z" fill="#101080"/></svg>
<svg style="position:absolute;left:924.7px;top:67.5px;" width="14" height="11" viewBox="0 0 14 11"><path d="M1 5 L6 0.5 M1 5 L6 9.5 M1 5 H12" stroke="#8c8c8c" stroke-width="2.2" fill="none"/></svg>
<svg style="position:absolute;left:951.7px;top:67.5px;" width="14" height="11" viewBox="0 0 14 11"><g transform="translate(14,0) scale(-1,1)"><path d="M1 5 L6 0.5 M1 5 L6 9.5 M1 5 H12" stroke="#8c8c8c" stroke-width="2.2" fill="none"/></g></svg>
<svg style="position:absolute;left:15.4px;top:93.8px;" width="21" height="20" viewBox="0 0 21 20"><rect x="4" y="4" width="12" height="10" rx="2" fill="#d8d8d8" stroke="#8e8e8e" stroke-width="1.6"/><path d="M8 6 V12 M11 6 V12" stroke="#8e8e8e" stroke-width="1.2"/><path d="M1 5 L3 2 M19 5 L17 2 M1 14 L3 17 M19 14 L17 17" stroke="#b8b8b8" stroke-width="1.2"/></svg>
<svg style="position:absolute;left:43.3px;top:93.5px;" width="21" height="20" viewBox="0 0 21 20"><path d="M1 7 L5 1 L9 7 Z" fill="#d8d8d8" stroke="#8e8e8e"/><path d="M11 2 Q16 2 16 7" stroke="#b8b8b8" fill="none" stroke-width="1.3"/><rect x="4" y="9" width="16" height="9" rx="2" fill="#d8d8d8" stroke="#8e8e8e" stroke-width="1.2"/><path d="M8 11 V16 M12 11 V16 M16 11 V16" stroke="#fff" stroke-width="1.5"/></svg>
<svg style="position:absolute;left:80.5px;top:93.5px;" width="20" height="20" viewBox="0 0 20 20"><circle cx="9.5" cy="9.5" r="8.3" fill="#efefef" stroke="#a0a0a0" stroke-width="1.7"/><path d="M7 4.5 L13.5 9.5 L7 14.5 Z" fill="#b0b0b0"/></svg>
<svg style="position:absolute;left:108.4px;top:93.5px;" width="20" height="20" viewBox="0 0 20 20"><circle cx="9.5" cy="9.5" r="8.3" fill="#efefef" stroke="#a0a0a0" stroke-width="1.7"/><rect x="6" y="6" width="7" height="7" fill="#b0b0b0"/></svg>
<svg style="position:absolute;left:135.7px;top:93.5px;" width="20" height="20" viewBox="0 0 20 20"><circle cx="9.5" cy="9.5" r="8.3" fill="#efefef" stroke="#a0a0a0" stroke-width="1.7"/><path d="M5.5 5.5 L13.5 13.5 M13.5 5.5 L5.5 13.5" stroke="#b0b0b0" stroke-width="1.4"/></svg>
<svg style="position:absolute;left:173.5px;top:93.5px;" width="20" height="20" viewBox="0 0 20 20"><rect x="2" y="3" width="16" height="15" rx="1.5" fill="#ececec" stroke="#8e8e8e" stroke-width="1.6"/><path d="M5 6 H9 M5 9 H13 M5 12 H11" stroke="#b8b8b8" stroke-width="1.2"/></svg>
<svg style="position:absolute;left:200.9px;top:93.9px;" width="19" height="17" viewBox="0 0 19 17"><rect x="2" y="3" width="15" height="12" rx="1.5" fill="#ececec" stroke="#8e8e8e" stroke-width="1.6"/><path d="M6 5 V13 M10 5 V13 M14 5 V13" stroke="#b8b8b8" stroke-width="1.2"/></svg>
<svg style="position:absolute;left:238.5px;top:93.5px;" width="21" height="21" viewBox="0 0 21 21"><path d="M5 6 L11 6 L15 10 L15 15.5 L11 19.5 L5 19.5 L1 15.5 L1 10 Z" fill="#ececec" stroke="#8e8e8e" stroke-width="1.6"/><path d="M8 12.5 V19 M8 12.5 L12 8" stroke="#a8a8a8" stroke-width="1.3"/><path d="M9 11 L17 3" stroke="#8e8e8e" stroke-width="3"/><path d="M9 11 L17 3" stroke="#f4f4f4" stroke-width="1.2"/><circle cx="17.5" cy="2.5" r="2" fill="#f4f4f4" stroke="#8e8e8e" stroke-width="1.2"/></svg>
<svg style="position:absolute;left:265.5px;top:93.5px;" width="21" height="21" viewBox="0 0 21 21"><path d="M5 6 L11 6 L15 10 L15 15.5 L11 19.5 L5 19.5 L1 15.5 L1 10 Z" fill="#ececec" stroke="#8e8e8e" stroke-width="1.6"/><path d="M8 12.5 V19 M8 12.5 L12 8" stroke="#a8a8a8" stroke-width="1.3"/><rect x="7.5" y="12" width="12" height="7.5" fill="#e4e4e4" stroke="#8e8e8e" stroke-width="1.5"/><path d="M10.5 14 V18 M13.5 14 V18 M16.5 14 V18" stroke="#fff" stroke-width="1.3"/><path d="M13 3 Q17 3 17 8" stroke="#b8b8b8" fill="none"/></svg>
<svg style="position:absolute;left:293.1px;top:93.5px;" width="21" height="21" viewBox="0 0 21 21"><path d="M5 6 L11 6 L15 10 L15 15.5 L11 19.5 L5 19.5 L1 15.5 L1 10 Z" fill="#ececec" stroke="#8e8e8e" stroke-width="1.6"/><path d="M8 12.5 V19 M8 12.5 L12 8" stroke="#a8a8a8" stroke-width="1.3"/><path d="M9 2 L19 15 M19 2 L10 12" stroke="#8e8e8e" stroke-width="1.4"/></svg>
<svg style="position:absolute;left:332.0px;top:93.5px;" width="20" height="20" viewBox="0 0 20 20"><rect x="2" y="3" width="16" height="15" rx="1.5" fill="#ececec" stroke="#8e8e8e" stroke-width="1.6"/><path d="M5 6 H9 M5 9 H13 M5 12 H11" stroke="#b8b8b8" stroke-width="1.2"/></svg>
<svg style="position:absolute;left:358.4px;top:93.5px;" width="21" height="20" viewBox="0 0 21 20"><rect x="2" y="3" width="17" height="15" rx="1.5" fill="#ececec" stroke="#8e8e8e" stroke-width="1.6"/><rect x="5" y="6" width="11" height="4" fill="#c8c8c8"/><path d="M5 13 L9 16 L13 13" stroke="#b8b8b8" fill="none"/></svg>
<svg style="position:absolute;left:386.5px;top:93.5px;" width="20" height="20" viewBox="0 0 20 20"><rect x="2" y="3" width="16" height="15" rx="1.5" fill="#ececec" stroke="#8e8e8e" stroke-width="1.6"/><path d="M5 6 H9 M5 9 H13 M5 12 H11" stroke="#b8b8b8" stroke-width="1.2"/></svg>
<svg style="position:absolute;left:428.7px;top:93.9px;" width="21" height="17" viewBox="0 0 21 17"><rect x="4" y="1" width="12" height="10" fill="#ececec" stroke="#8e8e8e" stroke-width="1.2"/><path d="M1 16 L3 12 H18 V16 Z" fill="#e4e4e4" stroke="#8e8e8e" stroke-width="1.2"/><path d="M9 4 V9 M11 4 V9" stroke="#c0c0c0" stroke-width="1.2"/></svg>
<svg style="position:absolute;left:456.8px;top:93.9px;" width="18" height="17" viewBox="0 0 18 17"><rect x="4" y="1" width="12" height="10" fill="#ececec" stroke="#8e8e8e" stroke-width="1.2"/><path d="M1 16 L3 12 H18 V16 Z" fill="#e4e4e4" stroke="#8e8e8e" stroke-width="1.2"/><path d="M9 3.5 L13 6 L9 8.5 Z" fill="#b8b8b8"/></svg>
<svg style="position:absolute;left:484.4px;top:93.5px;" width="20" height="20" viewBox="0 0 20 20"><rect x="3" y="1" width="11" height="10" fill="#f8d0f0" stroke="#222" stroke-width="1.4"/><path d="M7 3 V8 M10 3 V8" stroke="#e020e0" stroke-width="1.5"/><path d="M1 11 H17 L18 16 H1 Z" fill="#f090c0" stroke="#222" stroke-width="1.2"/><circle cx="6" cy="15" r="2.5" fill="#40d0f0"/><circle cx="13" cy="15" r="2.5" fill="#40d0f0"/></svg>
<svg style="position:absolute;left:510.7px;top:93.5px;" width="20" height="18" viewBox="0 0 20 18"><rect x="2" y="3" width="16" height="13" rx="1.5" fill="#ececec" stroke="#8e8e8e" stroke-width="1.6"/><path d="M5 6 H9 M5 9 H13 M5 12 H11" stroke="#b8b8b8" stroke-width="1.2"/></svg>
<svg style="position:absolute;left:538.2px;top:93.5px;" width="21" height="20" viewBox="0 0 21 20"><rect x="2" y="3" width="17" height="15" rx="1.5" fill="#ececec" stroke="#8e8e8e" stroke-width="1.6"/><path d="M6 5 V16 M10 5 V16 M14 5 V16" stroke="#b8b8b8" stroke-width="1.2"/></svg>
<svg style="position:absolute;left:565.8px;top:93.5px;" width="20" height="18" viewBox="0 0 20 18"><rect x="2" y="3" width="16" height="13" rx="1.5" fill="#ececec" stroke="#8e8e8e" stroke-width="1.6"/><rect x="5" y="6" width="10" height="4" fill="#c8c8c8"/><path d="M5 13 L9 16 L13 13" stroke="#b8b8b8" fill="none"/></svg>
<svg style="position:absolute;left:592.7px;top:93.5px;" width="21" height="20" viewBox="0 0 21 20"><rect x="2" y="3" width="17" height="15" rx="1.5" fill="#ececec" stroke="#8e8e8e" stroke-width="1.6"/></svg>
<svg style="position:absolute;left:621.3px;top:93.5px;" width="20" height="20" viewBox="0 0 20 20"><rect x="2" y="3" width="16" height="15" rx="1.5" fill="#ececec" stroke="#8e8e8e" stroke-width="1.6"/><path d="M6 5 V16 M10 5 V16 M14 5 V16" stroke="#b8b8b8" stroke-width="1.2"/></svg>
<svg style="position:absolute;left:649.5px;top:94.5px;" width="20" height="19" viewBox="0 0 20 19"><rect x="2" y="3" width="16" height="14" rx="1.5" fill="#ececec" stroke="#8e8e8e" stroke-width="1.6"/><path d="M6 5 V15 M10 5 V15 M14 5 V15" stroke="#b8b8b8" stroke-width="1.2"/></svg>
<svg style="position:absolute;left:677.0px;top:94.5px;" width="20" height="19" viewBox="0 0 20 19"><rect x="1" y="1" width="8" height="8" fill="#a8a8a8"/><rect x="9" y="1" width="9" height="8" fill="#f0f0f0"/><rect x="1" y="9" width="17" height="9" fill="#c4c4c4"/></svg>
<svg style="position:absolute;left:703.3px;top:93.5px;" width="21" height="20" viewBox="0 0 21 20"><rect x="1" y="4" width="15" height="14" rx="1.5" fill="#ececec" stroke="#8e8e8e" stroke-width="1.2"/><path d="M3 9 L6 12 L10 6" stroke="#b8b8b8" stroke-width="1.5" fill="none"/><path d="M10 11 L18 2" stroke="#8e8e8e" stroke-width="2.2"/></svg>
<svg style="position:absolute;left:730.9px;top:93.5px;" width="20" height="18" viewBox="0 0 20 18"><rect x="3" y="1" width="14" height="10" fill="#ececec" stroke="#8e8e8e" stroke-width="1.2"/><path d="M6 8 L8 4 L10 8 L12 4 L14 8" stroke="#c8c8c8" fill="none"/><rect x="1" y="12" width="18" height="4" rx="1" fill="#e4e4e4" stroke="#8e8e8e" stroke-width="1.2"/></svg>
<svg style="position:absolute;left:772.8px;top:94.5px;" width="19" height="19" viewBox="0 0 19 19"><path d="M4 5 H2 V15 H4 M11 5 H13 V15 H11" stroke="#707070" stroke-width="1.6" fill="none"/><path d="M10 2 H16 V18 H10" stroke="#c8c8c8" fill="none" stroke-width="1"/></svg>
<svg style="position:absolute;left:800.3px;top:93.5px;" width="19" height="20" viewBox="0 0 19 20"><path d="M4 5 H2 V15 H4 M11 5 H13 V15 H11" stroke="#707070" stroke-width="1.6" fill="none"/><path d="M4 1 H17 V9" stroke="#c8c8c8" fill="none" stroke-width="1"/></svg>
<svg style="position:absolute;left:827.9px;top:93.5px;" width="17" height="20" viewBox="0 0 17 20"><path d="M4 5 H2 V15 H4 M11 5 H13 V15 H11" stroke="#707070" stroke-width="1.6" fill="none"/><path d="M8 1 V3 H15" stroke="#c8c8c8" fill="none" stroke-width="1"/></svg>
<svg style="position:absolute;left:855.2px;top:93.5px;" width="20" height="20" viewBox="0 0 20 20"><path d="M4 5 H2 V15 H4 M11 5 H13 V15 H11" stroke="#707070" stroke-width="1.6" fill="none"/><path d="M6 1 V4 H17 V9" stroke="#c8c8c8" fill="none" stroke-width="1"/></svg>
<svg style="position:absolute;left:883.4px;top:93.5px;" width="20" height="20" viewBox="0 0 20 20"><path d="M8 5 H6 V15 H8 M16 5 H18 V15 H16" stroke="#707070" stroke-width="1.6" fill="none"/><path d="M0 10 H5" stroke="#c8c8c8" stroke-width="1.2"/></svg>
<svg style="position:absolute;left:920.5px;top:93.5px;" width="20" height="20" viewBox="0 0 20 20"><path d="M9 5 H7 V15 H9 M16 5 H18 V15 H16" stroke="#707070" stroke-width="1.6" fill="none"/><path d="M1 2 V9 M1 12 H5" stroke="#c8c8c8" stroke-width="1.2"/></svg>
<svg style="position:absolute;left:950.5px;top:93.5px;" width="18" height="20" viewBox="0 0 18 20"><rect x="4" y="1" width="13" height="16" rx="1.5" fill="#fafafa" stroke="#808080" stroke-width="1.4"/><path d="M7 5 H15 M7 8 H15 M7 11 H15 M7 14 H15 M9 3 V16" stroke="#b8b8b8" stroke-width="1"/><path d="M0 6 V13" stroke="#c8c8c8" stroke-width="1.5"/></svg>
<svg style="position:absolute;left:976.8px;top:93.5px;" width="19" height="20" viewBox="0 0 19 20"><path d="M1 2 Q1 1 3 1 H10 Q12 1 12 3 V8 Q12 10 10 10 H7 L5 13 V10 H3 Q1 10 1 8 Z" fill="#fafafa" stroke="#808080" stroke-width="1.3"/><path d="M3 4 H10 M3 6 H10" stroke="#b8b8b8"/><path d="M15 5 H17 V15 H15" stroke="#707070" stroke-width="1.5" fill="none"/></svg>
<div style="left:1015px;top:91px;width:27.59999999999991px;height:26.400000000000006px;background:#fdf0c0;border:1px solid #f0d080;box-sizing:border-box;"></div>
<div style="left:12.6px;top:122.2px;width:26.9px;height:26.299999999999997px;background:#fdf0c0;border:1px solid #f0d080;box-sizing:border-box;"></div>
<div style="left:687.5px;top:122.2px;width:27.0px;height:26.299999999999997px;background:#fdf0c0;border:1px solid #f0d080;box-sizing:border-box;"></div>
<div style="left:715px;top:122.2px;width:27px;height:26.299999999999997px;background:#fdf0c0;border:1px solid #f0d080;box-sizing:border-box;"></div>
<div style="left:797.7px;top:122.2px;width:27.0px;height:26.299999999999997px;background:#fdf0c0;border:1px solid #f0d080;box-sizing:border-box;"></div>
<div style="left:1065px;top:122.2px;width:27.59999999999991px;height:26.299999999999997px;background:#fdf0c0;border:1px solid #f0d080;box-sizing:border-box;"></div>
<svg style="position:absolute;left:14.0px;top:123.5px;" width="24" height="24" viewBox="0 0 24 24"><path d="M14 12 L6 4" stroke="#222" stroke-width="2"/><path d="M4 2 H10 L4 8 Z" fill="#fff" stroke="#222" stroke-width="1.3" stroke-linejoin="miter"/><text x="12.0" y="23.5" font-size="13" font-family="Liberation Sans" fill="#1a1a30" text-anchor="middle" textLength="20" lengthAdjust="spacingAndGlyphs">Esc</text></svg>
<svg style="position:absolute;left:1016.5px;top:92.5px;" width="25" height="24" viewBox="0 0 25 24"><path d="M14 12 L6 4" stroke="#222" stroke-width="2"/><path d="M4 2 H10 L4 8 Z" fill="#fff" stroke="#222" stroke-width="1.3" stroke-linejoin="miter"/><text x="12.5" y="23.5" font-size="13" font-family="Liberation Sans" fill="#1a1a30" text-anchor="middle" textLength="21" lengthAdjust="spacingAndGlyphs">Esc</text></svg>
<svg style="position:absolute;left:43.1px;top:126px;" width="21" height="22.5" viewBox="0 0 21 22.5"><g transform="translate(0.5,1)"><path d="M0 5 H4 M4 0.5 V9.5 M16 0.5 V9.5 M16 5 H20" stroke="#1a1a1a" stroke-width="1.7" fill="none"/></g><text x="10.5" y="21.2" font-size="12.6" font-family="Liberation Sans" fill="#2c3352" text-anchor="middle" textLength="11.5" lengthAdjust="spacingAndGlyphs">F3</text></svg>
<svg style="position:absolute;left:70.7px;top:126px;" width="21" height="22.5" viewBox="0 0 21 22.5"><g transform="translate(0.5,1)"><path d="M0 5 H4 M4 0.5 V9.5 M16 0.5 V9.5 M16 5 H20" stroke="#1a1a1a" stroke-width="1.7" fill="none"/><path d="M7.5 9 L12.5 1" stroke="#1a1a1a" stroke-width="1.5"/></g><text x="10.5" y="21.2" font-size="12.6" font-family="Liberation Sans" fill="#2c3352" text-anchor="middle" textLength="11.5" lengthAdjust="spacingAndGlyphs">F4</text></svg>
<svg style="position:absolute;left:98.2px;top:126px;" width="21" height="22.5" viewBox="0 0 21 22.5"><g transform="translate(0.5,1)"><path d="M0 5 H4 M4 0.5 V9.5 M16 0.5 V9.5 M16 5 H20" stroke="#1a1a1a" stroke-width="1.7" fill="none"/><text x="10" y="9.3" font-size="11.5" font-family="Liberation Sans" fill="#1a1a1a" text-anchor="middle" textLength="7" lengthAdjust="spacingAndGlyphs">P</text></g><text x="10.5" y="21.2" font-size="12.6" font-family="Liberation Sans" fill="#2c3352" text-anchor="middle" textLength="18" lengthAdjust="spacingAndGlyphs">sF1</text></svg>
<svg style="position:absolute;left:125.7px;top:126px;" width="21" height="22.5" viewBox="0 0 21 22.5"><g transform="translate(0.5,1)"><path d="M0 5 H4 M4 0.5 V9.5 M16 0.5 V9.5 M16 5 H20" stroke="#1a1a1a" stroke-width="1.7" fill="none"/><text x="10" y="9.3" font-size="11.5" font-family="Liberation Sans" fill="#1a1a1a" text-anchor="middle" textLength="7" lengthAdjust="spacingAndGlyphs">N</text></g><text x="10.5" y="21.2" font-size="12.6" font-family="Liberation Sans" fill="#2c3352" text-anchor="middle" textLength="18" lengthAdjust="spacingAndGlyphs">sF2</text></svg>
<svg style="position:absolute;left:153.3px;top:126px;" width="21" height="22.5" viewBox="0 0 21 22.5"><g transform="translate(0.5,1)"><path d="M0 9 H6 V1 H13 V9 H20" stroke="#a8a8a8" stroke-width="1.4" fill="none"/><path d="M4 7 L7 3 L9 7" stroke="#a8a8a8" fill="none"/></g><text x="10.5" y="21.2" font-size="12.6" font-family="Liberation Sans" fill="#a8a8a8" text-anchor="middle" textLength="11.5" lengthAdjust="spacingAndGlyphs">aR</text></svg>
<svg style="position:absolute;left:180.5px;top:126px;" width="21" height="22.5" viewBox="0 0 21 22.5"><g transform="translate(0.5,1)"><path d="M0 9 H6 V1 H13 V9 H20" stroke="#a8a8a8" stroke-width="1.4" fill="none"/><path d="M11 3 L14 7 L16 3" stroke="#a8a8a8" fill="none"/></g><text x="10.5" y="21.2" font-size="12.6" font-family="Liberation Sans" fill="#a8a8a8" text-anchor="middle" textLength="11.5" lengthAdjust="spacingAndGlyphs">aF</text></svg>
<svg style="position:absolute;left:207.5px;top:126px;" width="21" height="22.5" viewBox="0 0 21 22.5"><g transform="translate(0.5,1)"><path d="M1 4.5 H19" stroke="#1a1a1a" stroke-width="1.8"/></g><text x="10.5" y="21.2" font-size="12.6" font-family="Liberation Sans" fill="#2c3352" text-anchor="middle" textLength="11.5" lengthAdjust="spacingAndGlyphs">F5</text></svg>
<svg style="position:absolute;left:235.5px;top:126px;" width="21" height="22.5" viewBox="0 0 21 22.5"><g transform="translate(0.5,1)"><path d="M10 0 V9" stroke="#1a1a1a" stroke-width="1.8"/></g><text x="10.5" y="21.2" font-size="12.6" font-family="Liberation Sans" fill="#2c3352" text-anchor="middle" textLength="11.5" lengthAdjust="spacingAndGlyphs">F6</text></svg>
<svg style="position:absolute;left:263.9px;top:126px;" width="21" height="22.5" viewBox="0 0 21 22.5"><g transform="translate(0.5,1)"><path d="M0 5 H17 M12 1 L17 5 L12 9 M15 1 L19 5 L15 9" stroke="#1a1a1a" stroke-width="1.5" fill="none"/></g><text x="10.5" y="21.2" font-size="12.6" font-family="Liberation Sans" fill="#2c3352" text-anchor="middle" textLength="18" lengthAdjust="spacingAndGlyphs">sF8</text></svg>
<svg style="position:absolute;left:290.6px;top:126px;" width="21" height="22.5" viewBox="0 0 21 22.5"><g transform="translate(0.5,1)"><path d="M3 5 H17 M10 0.5 V9.5 M5 1 L15 9 M15 1 L5 9" stroke="#1a1a1a" stroke-width="1.3" fill="none"/></g><text x="10.5" y="21.2" font-size="12.6" font-family="Liberation Sans" fill="#2c3352" text-anchor="middle" textLength="18" lengthAdjust="spacingAndGlyphs">sF9</text></svg>
<svg style="position:absolute;left:318.2px;top:126px;" width="21" height="22.5" viewBox="0 0 21 22.5"><g transform="translate(0.5,1)"><path d="M0 5 H3.5" stroke="#1a1a1a" stroke-width="1.4"/><path d="M16.5 5 H20" stroke="#1a1a1a" stroke-width="1.4"/><path d="M6 0.5 Q3 5 6 9.5 M14 0.5 Q17 5 14 9.5" stroke="#1a1a1a" stroke-width="1.5" fill="none"/></g><text x="10.5" y="21.2" font-size="12.6" font-family="Liberation Sans" fill="#2c3352" text-anchor="middle" textLength="11.5" lengthAdjust="spacingAndGlyphs">F9</text></svg>
<svg style="position:absolute;left:345.7px;top:126px;" width="21" height="22.5" viewBox="0 0 21 22.5"><g transform="translate(0.5,1)"><path d="M0 5 H3.5" stroke="#1a1a1a" stroke-width="1.4"/><path d="M16.5 5 H20" stroke="#1a1a1a" stroke-width="1.4"/><path d="M6 0.5 Q3 5 6 9.5 M14 0.5 Q17 5 14 9.5" stroke="#1a1a1a" stroke-width="1.5" fill="none"/><path d="M8 9 L12 1" stroke="#1a1a1a" stroke-width="1.4"/></g><text x="10.5" y="21.2" font-size="12.6" font-family="Liberation Sans" fill="#2c3352" text-anchor="middle" textLength="18" lengthAdjust="spacingAndGlyphs">F11</text></svg>
<svg style="position:absolute;left:373.3px;top:126px;" width="21" height="22.5" viewBox="0 0 21 22.5"><g transform="translate(0.5,1)"><path d="M0 5 H3.5" stroke="#1a1a1a" stroke-width="1.4"/><path d="M16.5 5 H20" stroke="#1a1a1a" stroke-width="1.4"/><path d="M6 0.5 Q3 5 6 9.5 M14 0.5 Q17 5 14 9.5" stroke="#1a1a1a" stroke-width="1.5" fill="none"/><text x="10" y="9.3" font-size="11.5" font-family="Liberation Sans" fill="#1a1a1a" text-anchor="middle" textLength="7" lengthAdjust="spacingAndGlyphs">S</text></g><text x="10.5" y="21.2" font-size="12.6" font-family="Liberation Sans" fill="#2c3352" text-anchor="middle" textLength="18" lengthAdjust="spacingAndGlyphs">sF3</text></svg>
<svg style="position:absolute;left:400.5px;top:126px;" width="21" height="22.5" viewBox="0 0 21 22.5"><g transform="translate(0.5,1)"><path d="M0 5 H3.5" stroke="#1a1a1a" stroke-width="1.4"/><path d="M16.5 5 H20" stroke="#1a1a1a" stroke-width="1.4"/><path d="M6 0.5 Q3 5 6 9.5 M14 0.5 Q17 5 14 9.5" stroke="#1a1a1a" stroke-width="1.5" fill="none"/><text x="10" y="9.3" font-size="11.5" font-family="Liberation Sans" fill="#1a1a1a" text-anchor="middle" textLength="7" lengthAdjust="spacingAndGlyphs">R</text></g><text x="10.5" y="21.2" font-size="12.6" font-family="Liberation Sans" fill="#2c3352" text-anchor="middle" textLength="18" lengthAdjust="spacingAndGlyphs">sF4</text></svg>
<svg style="position:absolute;left:427.8px;top:126px;" width="21" height="22.5" viewBox="0 0 21 22.5"><g transform="translate(0.5,1)"><path d="M0 5 H3.5" stroke="#1a1a1a" stroke-width="1.4"/><path d="M16.5 5 H20" stroke="#1a1a1a" stroke-width="1.4"/><path d="M6 0.5 Q3 5 6 9.5 M14 0.5 Q17 5 14 9.5" stroke="#1a1a1a" stroke-width="1.5" fill="none"/><text x="10" y="9.3" font-size="11.5" font-family="Liberation Sans" fill="#1a1a1a" text-anchor="middle" textLength="7" lengthAdjust="spacingAndGlyphs">P</text></g><text x="10.5" y="21.2" font-size="12.6" font-family="Liberation Sans" fill="#2c3352" text-anchor="middle" textLength="18" lengthAdjust="spacingAndGlyphs">sF5</text></svg>
<svg style="position:absolute;left:455.5px;top:126px;" width="21" height="22.5" viewBox="0 0 21 22.5"><g transform="translate(0.5,1)"><path d="M0 5 H3.5" stroke="#1a1a1a" stroke-width="1.4"/><path d="M16.5 5 H20" stroke="#1a1a1a" stroke-width="1.4"/><path d="M6 0.5 Q3 5 6 9.5 M14 0.5 Q17 5 14 9.5" stroke="#1a1a1a" stroke-width="1.5" fill="none"/><text x="10" y="9.3" font-size="11.5" font-family="Liberation Sans" fill="#1a1a1a" text-anchor="middle" textLength="7" lengthAdjust="spacingAndGlyphs">N</text></g><text x="10.5" y="21.2" font-size="12.6" font-family="Liberation Sans" fill="#2c3352" text-anchor="middle" textLength="18" lengthAdjust="spacingAndGlyphs">sF6</text></svg>
<svg style="position:absolute;left:483.1px;top:126px;" width="21" height="22.5" viewBox="0 0 21 22.5"><g transform="translate(0.5,1)"><path d="M0 5 H3 M17 5 H20" stroke="#1a1a1a" stroke-width="1.4"/><text x="10" y="9.5" font-size="11" font-weight="bold" font-family="Liberation Sans" fill="#1a1a1a" text-anchor="middle">{F}</text></g><text x="10.5" y="21.2" font-size="12.6" font-family="Liberation Sans" fill="#2c3352" text-anchor="middle" textLength="18" lengthAdjust="spacingAndGlyphs">F10</text></svg>
<svg style="position:absolute;left:510.6px;top:126px;" width="21" height="22.5" viewBox="0 0 21 22.5"><g transform="translate(0.5,1)"><rect x="3.5" y="1" width="13" height="8" fill="none" stroke="#a8a8a8" stroke-width="1.3"/><path d="M0 5 H3.5 M16.5 5 H20" stroke="#a8a8a8"/></g><text x="10.5" y="21.2" font-size="12.6" font-family="Liberation Sans" fill="#a8a8a8" text-anchor="middle" textLength="18" lengthAdjust="spacingAndGlyphs">sF7</text></svg>
<svg style="position:absolute;left:538.2px;top:126px;" width="21" height="22.5" viewBox="0 0 21 22.5"><g transform="translate(0.5,1)"><path d="M3 0.5 V9.5 M17 0.5 V9.5 M1 0.5 V5 H3 M19 0.5 V5 H17" stroke="#1a1a1a" stroke-width="1.5" fill="none"/></g><text x="10.5" y="21.2" font-size="12.6" font-family="Liberation Sans" fill="#2c3352" text-anchor="middle" textLength="11.5" lengthAdjust="spacingAndGlyphs">c3</text></svg>
<svg style="position:absolute;left:565.7px;top:126px;" width="21" height="22.5" viewBox="0 0 21 22.5"><g transform="translate(0.5,1)"><path d="M3 0.5 V9.5 M17 0.5 V9.5 M1 0.5 V5 H3 M19 0.5 V5 H17 M7 9 L13 1.5" stroke="#1a1a1a" stroke-width="1.5" fill="none"/></g><text x="10.5" y="21.2" font-size="12.6" font-family="Liberation Sans" fill="#2c3352" text-anchor="middle" textLength="11.5" lengthAdjust="spacingAndGlyphs">c4</text></svg>
<svg style="position:absolute;left:593.2px;top:126px;" width="21" height="22.5" viewBox="0 0 21 22.5"><g transform="translate(0.5,1)"><path d="M3 0.5 V9.5 M17 0.5 V9.5 M1 0.5 V5 H3 M19 0.5 V5 H17" stroke="#1a1a1a" stroke-width="1.5" fill="none"/><text x="10" y="9.3" font-size="11" font-family="Liberation Sans" fill="#1a1a1a" text-anchor="middle">P</text></g><text x="10.5" y="21.2" font-size="12.6" font-family="Liberation Sans" fill="#2c3352" text-anchor="middle" textLength="11.5" lengthAdjust="spacingAndGlyphs">c5</text></svg>
<svg style="position:absolute;left:620.5px;top:126px;" width="21" height="22.5" viewBox="0 0 21 22.5"><g transform="translate(0.5,1)"><path d="M3 0.5 V9.5 M17 0.5 V9.5 M1 0.5 V5 H3 M19 0.5 V5 H17" stroke="#1a1a1a" stroke-width="1.5" fill="none"/><text x="10" y="9.3" font-size="11" font-family="Liberation Sans" fill="#1a1a1a" text-anchor="middle">N</text></g><text x="10.5" y="21.2" font-size="12.6" font-family="Liberation Sans" fill="#2c3352" text-anchor="middle" textLength="11.5" lengthAdjust="spacingAndGlyphs">c6</text></svg>
<svg style="position:absolute;left:1045.1px;top:93px;" width="21" height="23.5" viewBox="0 0 21 23.5"><g transform="translate(0.5,1.5)"><rect x="4" y="0.5" width="12" height="5" fill="none" stroke="#a0a0a8" stroke-width="1.3"/><path d="M10 5.5 V10 M6 8 H14" stroke="#a0a0a8" stroke-width="1.2"/></g><text x="10.5" y="22.7" font-size="12.6" font-family="Liberation Sans" fill="#8890a8" text-anchor="middle" textLength="11.5" lengthAdjust="spacingAndGlyphs">F3</text></svg>
<svg style="position:absolute;left:1073.5px;top:93px;" width="21" height="23.5" viewBox="0 0 21 23.5"><g transform="translate(0.5,1.5)"><rect x="0.5" y="0.5" width="19" height="9" fill="none" stroke="#a0a0a8" stroke-width="1.3"/><path d="M10 0.5 V9.5" stroke="#a0a0a8"/><text x="5" y="8" font-size="7" font-family="Liberation Sans" fill="#a0a0a8" text-anchor="middle">N</text></g><text x="10.5" y="22.7" font-size="12.6" font-family="Liberation Sans" fill="#8890a8" text-anchor="middle" textLength="11.5" lengthAdjust="spacingAndGlyphs">F4</text></svg>
<svg style="position:absolute;left:1100.4px;top:93px;" width="21" height="23.5" viewBox="0 0 21 23.5"><g transform="translate(0.5,1.5)"><rect x="4" y="0.5" width="12" height="5" fill="none" stroke="#a0a0a8" stroke-width="1.3"/><path d="M10 5.5 V10 M6 8 H14 M8 0.5 V5.5 M12 0.5 V5.5" stroke="#a0a0a8" stroke-width="1.1"/></g><text x="10.5" y="22.7" font-size="12.6" font-family="Liberation Sans" fill="#8890a8" text-anchor="middle" textLength="11.5" lengthAdjust="spacingAndGlyphs">F5</text></svg>
<svg style="position:absolute;left:1128.0px;top:93px;" width="21" height="23.5" viewBox="0 0 21 23.5"><g transform="translate(0.5,1.5)"><path d="M3 10 V4 H14" stroke="#a0a0a8" stroke-width="1.4" fill="none"/><path d="M13 1 L18 4 L13 7 Z" fill="#a0a0a8"/></g><text x="10.5" y="22.7" font-size="12.6" font-family="Liberation Sans" fill="#8890a8" text-anchor="middle" textLength="11.5" lengthAdjust="spacingAndGlyphs">F6</text></svg>
<svg style="position:absolute;left:1155.2px;top:93px;" width="21" height="23.5" viewBox="0 0 21 23.5"><g transform="translate(0.5,1.5)"><path d="M4 0 V6 H14" stroke="#a0a0a8" stroke-width="1.4" fill="none"/><path d="M13 3 L18 6 L13 9 Z" fill="#a0a0a8"/></g><text x="10.5" y="22.7" font-size="12.6" font-family="Liberation Sans" fill="#8890a8" text-anchor="middle" textLength="11.5" lengthAdjust="spacingAndGlyphs">F7</text></svg>
<svg style="position:absolute;left:1182.5px;top:93px;" width="21" height="23.5" viewBox="0 0 21 23.5"><g transform="translate(0.5,1.5)"><rect x="0.5" y="2" width="9" height="5" fill="none" stroke="#c8c8d0" stroke-width="1.2"/><rect x="10" y="2" width="9" height="5" fill="none" stroke="#a0a0a8" stroke-width="1.3"/><path d="M14.5 0 V10" stroke="#a0a0a8" stroke-width="1.2"/></g><text x="10.5" y="22.7" font-size="12.6" font-family="Liberation Sans" fill="#8890a8" text-anchor="middle" textLength="11.5" lengthAdjust="spacingAndGlyphs">F8</text></svg>
<svg style="position:absolute;left:1209.8px;top:93px;" width="21" height="23.5" viewBox="0 0 21 23.5"><g transform="translate(0.5,1.5)"><rect x="0.5" y="2" width="9" height="5" fill="none" stroke="#a0a0a8" stroke-width="1.3"/><rect x="10" y="2" width="9" height="5" fill="none" stroke="#c8c8d0" stroke-width="1.2"/><path d="M5 0 V10" stroke="#a0a0a8" stroke-width="1.2"/></g><text x="10.5" y="22.7" font-size="12.6" font-family="Liberation Sans" fill="#8890a8" text-anchor="middle" textLength="11.5" lengthAdjust="spacingAndGlyphs">F9</text></svg>
<svg style="position:absolute;left:664.3px;top:125.3px;" width="19" height="18" viewBox="0 0 19 18"><rect x="1" y="3" width="16" height="14" rx="1" fill="#f8e0f8" stroke="#222" stroke-width="1.4"/><rect x="4" y="0.5" width="6" height="3" fill="#8020a0"/><path d="M4 7 H14 M4 10 H14 M4 13 H14" stroke="#555" stroke-width="1.4"/></svg>
<svg style="position:absolute;left:691.8px;top:125.3px;" width="19" height="18" viewBox="0 0 19 18"><rect x="1" y="3" width="16" height="14" fill="#f4f4f4" stroke="#8e8e8e" stroke-width="1.3"/><rect x="4" y="0.5" width="6" height="3" fill="#c0c0c0"/><path d="M4 8 H14 M4 12 H14 M9 5 V15" stroke="#c8c8c8"/></svg>
<svg style="position:absolute;left:718.2px;top:125.3px;" width="20" height="18" viewBox="0 0 20 18"><rect x="1" y="1" width="18" height="16" fill="#b8d8f0" stroke="#333" stroke-width="1.5"/><rect x="4" y="8" width="10" height="6" fill="#e8e060" stroke="#222" stroke-width="1.2"/><path d="M13 3 L16 10 M16 3 L13 9" stroke="#f0a020" stroke-width="1.5"/></svg>
<svg style="position:absolute;left:745.7px;top:125.3px;" width="20" height="18" viewBox="0 0 20 18"><rect x="1" y="1" width="18" height="16" fill="#b8d8f0" stroke="#333" stroke-width="1.5"/><path d="M4 5 H14 V14 H4 Z" fill="#fff" stroke="#333" stroke-width="1"/><path d="M4 14 L9 9 L14 14" fill="#a0e0a0" stroke="#333"/></svg>
<svg style="position:absolute;left:773.3px;top:125.3px;" width="20" height="18" viewBox="0 0 20 18"><rect x="1" y="1" width="18" height="16" fill="#b8d8f0" stroke="#333" stroke-width="1.5"/><circle cx="6" cy="11" r="3" fill="#f0a8a0" stroke="#333"/><circle cx="12.5" cy="11" r="3" fill="#f0a8a0" stroke="#333"/><path d="M3 8 L6 4 M15 8 L12 4" stroke="#333"/></svg>
<svg style="position:absolute;left:800.8px;top:125.3px;" width="20" height="18" viewBox="0 0 20 18"><rect x="1" y="1" width="18" height="16" fill="#b8d8f0" stroke="#333" stroke-width="1.5"/><text x="9" y="14.5" font-size="13" font-weight="bold" font-family="Liberation Serif" fill="#a05010" text-anchor="middle">F</text></svg>
<svg style="position:absolute;left:838.5px;top:125.3px;" width="19" height="18" viewBox="0 0 19 18"><rect x="1" y="1" width="16" height="16" fill="#b8d8f0" stroke="#333" stroke-width="1.5"/><rect x="3" y="4" width="12" height="2.5" fill="#e0c040" stroke="#333" stroke-width="0.8"/><rect x="3" y="10" width="5" height="5" fill="#c02050"/><rect x="10" y="10" width="5" height="5" fill="#208090"/></svg>
<svg style="position:absolute;left:865.5px;top:125.3px;" width="20" height="18" viewBox="0 0 20 18"><rect x="1" y="1" width="17" height="16" fill="#b8e8f8" stroke="#333" stroke-width="1.5"/><rect x="2" y="2" width="15" height="2" fill="#20a040"/><path d="M5 6 V15 M9.5 6 V15 M14 6 V15" stroke="#4020e0" stroke-width="2"/></svg>
<svg style="position:absolute;left:893.3px;top:125.3px;" width="20" height="18" viewBox="0 0 20 18"><rect x="1" y="7" width="17" height="10" fill="#c8f0e0" stroke="#333" stroke-width="1.3"/><path d="M5 1 V8 M13 1 V8" stroke="#20a040" stroke-width="2"/><path d="M2.5 5 L5 8.5 L7.5 5 M10.5 5 L13 8.5 L15.5 5" stroke="#20a040" stroke-width="1.5" fill="none"/><path d="M4 11 V16 M7 11 V16 M10 11 V16 M13 11 V16" stroke="#333"/></svg>
<svg style="position:absolute;left:930.4px;top:125.3px;" width="20" height="18" viewBox="0 0 20 18"><path d="M1 1 H14 L18 5 V17 H1 Z" fill="#c8ecd0" stroke="#222" stroke-width="1.5"/><path d="M4 6 L9 13 L15 5" stroke="#f08020" stroke-width="2.5" fill="none"/></svg>
<svg style="position:absolute;left:957.9px;top:125.3px;" width="20" height="18" viewBox="0 0 20 18"><path d="M1 1 H14 L18 5 V17 H1 Z" fill="#c8ecd0" stroke="#222" stroke-width="1.5"/><text x="9" y="14" font-size="13" font-weight="bold" font-family="Liberation Serif" fill="#1e90ff" text-anchor="middle">D</text></svg>
<svg style="position:absolute;left:985.5px;top:125.3px;" width="20" height="18" viewBox="0 0 20 18"><path d="M1 1 H14 L18 5 V17 H1 Z" fill="#c8ecd0" stroke="#222" stroke-width="1.5"/><text x="7" y="14" font-size="12" font-weight="bold" font-family="Liberation Serif" fill="#1e90ff" text-anchor="middle">D</text><path d="M11 7 L13 14 L16 6" stroke="#f08020" stroke-width="1.5" fill="none"/></svg>
<svg style="position:absolute;left:1013.0px;top:125.3px;" width="20" height="18" viewBox="0 0 20 18"><path d="M1 1 H14 L18 5 V17 H1 Z" fill="#c8ecd0" stroke="#222" stroke-width="1.5"/><text x="7" y="14" font-size="12" font-weight="bold" font-family="Liberation Serif" fill="#1e90ff" text-anchor="middle">D</text><circle cx="13" cy="11" r="3" fill="none" stroke="#f040c0" stroke-width="1.5"/></svg>
<svg style="position:absolute;left:1040.5px;top:125.3px;" width="20" height="18" viewBox="0 0 20 18"><path d="M1 1 H14 L18 5 V17 H1 Z" fill="#c8ecd0" stroke="#222" stroke-width="1.5"/><path d="M3 5 L6 12 L9 5" stroke="#f08020" stroke-width="1.5" fill="none"/><circle cx="13" cy="11" r="3" fill="none" stroke="#f040c0" stroke-width="1.5"/></svg>
<svg style="position:absolute;left:1068.1px;top:125.3px;" width="20" height="18" viewBox="0 0 20 18"><path d="M1 1 H14 L18 5 V17 H1 Z" fill="#c8ecd0" stroke="#222" stroke-width="1.5"/><text x="9.5" y="15" font-size="14" font-weight="bold" font-family="Liberation Sans" fill="#111" text-anchor="middle">A</text></svg>
<svg style="position:absolute;left:1105.5px;top:125.3px;" width="18" height="18" viewBox="0 0 18 18"><circle cx="7" cy="7" r="6" fill="#d8e8f8" stroke="#333" stroke-width="1.2"/><path d="M11 11 L16 16" stroke="#111" stroke-width="2.4"/><path d="M3.5 7 H10.5 M7 3.5 V10.5" stroke="#3010d0" stroke-width="2.2"/></svg>
<svg style="position:absolute;left:1133.6px;top:125.3px;" width="17" height="18" viewBox="0 0 17 18"><circle cx="7" cy="7" r="6" fill="#c8f0a0" stroke="#333" stroke-width="1.2"/><path d="M11 11 L16 16" stroke="#111" stroke-width="2.4"/><path d="M3.5 7 H10.5" stroke="#208020" stroke-width="2.2"/></svg>
<svg style="position:absolute;left:1170.2px;top:125.3px;" width="20" height="18" viewBox="0 0 20 18"><circle cx="6" cy="5" r="4" fill="#7040e0" stroke="#333" stroke-width="1.2"/><path d="M4 9 L1 13" stroke="#111" stroke-width="1.8"/><path d="M8 10 H11 M11 7 V16 M14 7 V16 M14 11 H18" stroke="#f08040" stroke-width="2"/></svg>
<svg style="position:absolute;left:1198.3px;top:125.3px;" width="20" height="18" viewBox="0 0 20 18"><circle cx="6" cy="5" r="4" fill="#e0e0e0" stroke="#a8a8a8" stroke-width="1.2"/><path d="M4 9 L1 13" stroke="#a8a8a8" stroke-width="1.6"/><path d="M11 7 V16 M14 7 V16" stroke="#e0d8d0" stroke-width="2"/></svg>
<svg style="position:absolute;left:1235.4px;top:125.3px;" width="21" height="18" viewBox="0 0 21 18"><rect x="1" y="1" width="19" height="16" rx="1" fill="#222" /><rect x="3" y="3" width="15" height="11" fill="#20b0b0"/><path d="M5 5 H9 M5 8 H15 M5 11 H12 M10 5 V13" stroke="#0a4040" stroke-width="1.2"/></svg>
<svg style="position:absolute;left:1277.9px;top:125.3px;" width="20" height="18" viewBox="0 0 20 18"><rect x="4" y="5" width="14" height="12" fill="#a8e8d8" stroke="#333" stroke-width="1.3"/><path d="M1 2 Q1 0.5 3 0.5 H12 Q14 0.5 14 2 V8 Q14 10 12 10 H6 L4 12 V10 H3 Q1 10 1 8 Z" fill="#fff" stroke="#e02050" stroke-width="1.3"/><path d="M3.5 4 H11 M3.5 6.5 H11" stroke="#a0a0a0"/></svg>
<svg style="position:absolute;left:1316.9px;top:126.0px;" width="16" height="17" viewBox="0 0 16 17"><circle cx="7.5" cy="8" r="7" fill="#3070e0" stroke="#222" stroke-width="1.2"/><circle cx="7.5" cy="8" r="5" fill="#d0e0ff"/><path d="M4 8 L7 11 L12 4" stroke="#e02040" stroke-width="2" fill="none"/></svg>
<svg style="position:absolute;left:1344.4px;top:126.0px;" width="16" height="17" viewBox="0 0 16 17"><circle cx="7.5" cy="8" r="7" fill="#e04060" stroke="#333" stroke-width="1.2"/><circle cx="7.5" cy="8" r="5" fill="#f8a0b0"/><path d="M4.5 5 L10.5 11 M10.5 5 L4.5 11" stroke="#1060e0" stroke-width="2"/></svg>
<svg style="position:absolute;left:1370.2px;top:125.3px;" width="21" height="18" viewBox="0 0 21 18"><path d="M1 8 H9 L10 17 H1 Z M10 17 L11 8 H19 V17 Z" fill="#b070d0" stroke="#222" stroke-width="1.2"/><path d="M3 6 Q6 4 9 8 V15 Q6 12 3 13 Z M17 6 Q14 4 11 8 V15 Q14 12 17 13 Z" fill="#c8f0f8" stroke="#222" stroke-width="1"/><path d="M2 1 L5 4 M18 1 L15 4" stroke="#e02040" stroke-width="1.6"/></svg>
<svg style="position:absolute;left:1398.3px;top:125.3px;" width="20" height="18" viewBox="0 0 20 18"><path d="M1 9 H9 L10 17 H1 Z M10 17 L11 9 H18 V17 Z" fill="#eee" stroke="#a8a8a8" stroke-width="1.2"/><path d="M3 7 Q6 5 9 9 V15 Q6 13 3 14 Z M17 7 Q14 5 11 9 V15 Q14 13 17 14 Z" fill="#f4f4f4" stroke="#a8a8a8" stroke-width="1"/><path d="M7 0.5 L12 5 M12 0.5 L7 5" stroke="#c8c8c8" stroke-width="1.2"/></svg>
<svg style="position:absolute;left:1425.8px;top:125.3px;" width="20" height="18" viewBox="0 0 20 18"><path d="M1 9 H9 L10 17 H1 Z M10 17 L11 9 H18 V17 Z" fill="#eee" stroke="#a8a8a8" stroke-width="1.2"/><path d="M3 7 Q6 5 9 9 V15 Q6 13 3 14 Z M17 7 Q14 5 11 9 V15 Q14 13 17 14 Z" fill="#f4f4f4" stroke="#a8a8a8" stroke-width="1"/><path d="M7 0.5 L12 5 M12 0.5 L7 5" stroke="#c8c8c8" stroke-width="1.2"/></svg>
<svg style="position:absolute;left:1453.4px;top:125.3px;" width="20" height="18" viewBox="0 0 20 18"><path d="M1 9 H9 L10 17 H1 Z M10 17 L11 9 H18 V17 Z" fill="#eee" stroke="#a8a8a8" stroke-width="1.2"/><path d="M3 7 Q6 5 9 9 V15 Q6 13 3 14 Z M17 7 Q14 5 11 9 V15 Q14 13 17 14 Z" fill="#f4f4f4" stroke="#a8a8a8" stroke-width="1"/><path d="M7 0.5 L12 5 M12 0.5 L7 5" stroke="#c8c8c8" stroke-width="1.2"/></svg>
<div style="left:0px;top:151px;width:1920px;height:840px;background:#2b3a55;"></div>
<div style="left:0px;top:151px;width:314px;height:27px;background:#4d6082;"></div>
<div style="left:6.00px;top:158.15px;font-size:14px;line-height:14px;color:#ffffff;font-weight:normal;font-family:'Liberation Sans',sans-serif;white-space:nowrap;transform:scaleX(0.9639);transform-origin:0 0;">Project</div>
<svg style="position:absolute;left:247px;top:163px;" width="12" height="8" viewBox="0 0 12 8"><path d="M0.5 0.5 H11.5 L6 7 Z" fill="#fff"/></svg>
<svg style="position:absolute;left:272px;top:158.5px;" width="10" height="14" viewBox="0 0 10 14"><path d="M2 1 H8 M3 1 V8 M7 1 V8 M1 8 H9 M5 8 V13" stroke="#fff" stroke-width="1.6" fill="none"/></svg>
<svg style="position:absolute;left:296px;top:160px;" width="10" height="10" viewBox="0 0 10 10"><path d="M1 1 L9 9 M9 1 L1 9" stroke="#fff" stroke-width="1.8"/></svg>
<div style="left:0px;top:178px;width:314px;height:390px;background:#ffffff;"></div>
<div style="left:22.5px;top:181px;width:291.5px;height:20px;background:#d7dcea;"></div>
<div style="left:49.00px;top:183.85px;font-size:14px;line-height:14px;color:#1a1a1a;font-weight:normal;font-family:'Liberation Sans',sans-serif;white-space:nowrap;transform:scaleX(0.9250);transform-origin:0 0;">3-Floor Cargo Elevator</div>
<div style="left:70.00px;top:205.10px;font-size:14px;line-height:14px;color:#1a1a1a;font-weight:normal;font-family:'Liberation Sans',sans-serif;white-space:nowrap;transform:scaleX(0.9385);transform-origin:0 0;">Network Configuration</div>
<div style="left:91.00px;top:226.35px;font-size:14px;line-height:14px;color:#1a1a1a;font-weight:normal;font-family:'Liberation Sans',sans-serif;white-space:nowrap;transform:scaleX(0.9575);transform-origin:0 0;">Undefined Network</div>
<div style="left:112.00px;top:247.60px;font-size:14px;line-height:14px;color:#1a1a1a;font-weight:normal;font-family:'Liberation Sans',sans-serif;white-space:nowrap;transform:scaleX(0.9449);transform-origin:0 0;">NewPLC [B0S0 Internal Cnet]</div>
<div style="left:70.00px;top:268.85px;font-size:14px;line-height:14px;color:#1a1a1a;font-weight:normal;font-family:'Liberation Sans',sans-serif;white-space:nowrap;transform:scaleX(0.9217);transform-origin:0 0;">System Variable</div>
<div style="left:70.00px;top:290.10px;font-size:14px;line-height:14px;color:#000;font-weight:bold;font-family:'Liberation Sans',sans-serif;white-space:nowrap;transform:scaleX(1.0357);transform-origin:0 0;">NewPLC(XBC-DxxxE)-Offline</div>
<div style="left:91.00px;top:311.35px;font-size:14px;line-height:14px;color:#1a1a1a;font-weight:normal;font-family:'Liberation Sans',sans-serif;white-space:nowrap;transform:scaleX(0.9399);transform-origin:0 0;">Variable/Comment</div>
<div style="left:91.00px;top:332.60px;font-size:14px;line-height:14px;color:#1a1a1a;font-weight:normal;font-family:'Liberation Sans',sans-serif;white-space:nowrap;transform:scaleX(0.9180);transform-origin:0 0;">Parameter</div>
<div style="left:112.00px;top:353.85px;font-size:14px;line-height:14px;color:#1a1a1a;font-weight:normal;font-family:'Liberation Sans',sans-serif;white-space:nowrap;transform:scaleX(0.9277);transform-origin:0 0;">Basic Parameter</div>
<div style="left:112.00px;top:375.10px;font-size:14px;line-height:14px;color:#1a1a1a;font-weight:normal;font-family:'Liberation Sans',sans-serif;white-space:nowrap;transform:scaleX(0.9554);transform-origin:0 0;">I/O Parameter</div>
<div style="left:112.00px;top:396.35px;font-size:14px;line-height:14px;color:#1a1a1a;font-weight:normal;font-family:'Liberation Sans',sans-serif;white-space:nowrap;transform:scaleX(0.9228);transform-origin:0 0;">Internal Parameter</div>
<div style="left:91.00px;top:417.60px;font-size:14px;line-height:14px;color:#1a1a1a;font-weight:normal;font-family:'Liberation Sans',sans-serif;white-space:nowrap;transform:scaleX(0.9275);transform-origin:0 0;">Scan Program</div>
<div style="left:112.00px;top:438.85px;font-size:14px;line-height:14px;color:#1a1a1a;font-weight:normal;font-family:'Liberation Sans',sans-serif;white-space:nowrap;transform:scaleX(0.9181);transform-origin:0 0;">NewProgram</div>
<svg style="position:absolute;left:5.5px;top:186.2px;" width="9" height="8" viewBox="0 0 9 8"><path d="M8 0.5 V7.5 H1 Z" fill="#555"/></svg>
<svg style="position:absolute;left:27.5px;top:207.45px;" width="9" height="8" viewBox="0 0 9 8"><path d="M8 0.5 V7.5 H1 Z" fill="#555"/></svg>
<div style="left:37.5px;top:210.95px;width:5.0px;height:1px;background:#a0a0a0;"></div>
<svg style="position:absolute;left:27.5px;top:292.45px;" width="9" height="8" viewBox="0 0 9 8"><path d="M8 0.5 V7.5 H1 Z" fill="#555"/></svg>
<div style="left:37.5px;top:295.95px;width:5.0px;height:1px;background:#a0a0a0;"></div>
<div style="left:32px;top:201px;width:1px;height:4px;background:#a0a0a0;"></div>
<div style="left:32px;top:216.5px;width:1px;height:73.5px;background:#a0a0a0;"></div>
<div style="left:32px;top:274.7px;width:10.5px;height:1px;background:#a0a0a0;"></div>
<div style="left:53px;top:221px;width:1px;height:7px;background:#a0a0a0;"></div>
<svg style="position:absolute;left:49px;top:228.7px;" width="9" height="8" viewBox="0 0 9 8"><path d="M8 0.5 V7.5 H1 Z" fill="#555"/></svg>
<div style="left:59px;top:232.2px;width:5px;height:1px;background:#a0a0a0;"></div>
<div style="left:74px;top:243px;width:1px;height:10.949999999999989px;background:#a0a0a0;"></div>
<div style="left:74px;top:253.45px;width:11px;height:1px;background:#a0a0a0;"></div>
<div style="left:53px;top:308px;width:1px;height:26px;background:#a0a0a0;"></div>
<div style="left:53px;top:345px;width:1px;height:72.94999999999999px;background:#a0a0a0;"></div>
<div style="left:53px;top:317.2px;width:11px;height:1px;background:#a0a0a0;"></div>
<svg style="position:absolute;left:49px;top:334.95px;" width="9" height="8" viewBox="0 0 9 8"><path d="M8 0.5 V7.5 H1 Z" fill="#555"/></svg>
<div style="left:59px;top:338.45px;width:5px;height:1px;background:#a0a0a0;"></div>
<svg style="position:absolute;left:49px;top:419.95px;" width="9" height="8" viewBox="0 0 9 8"><path d="M8 0.5 V7.5 H1 Z" fill="#555"/></svg>
<div style="left:59px;top:423.45px;width:5px;height:1px;background:#a0a0a0;"></div>
<div style="left:74px;top:350px;width:1px;height:46.69999999999999px;background:#a0a0a0;"></div>
<div style="left:74px;top:359.7px;width:11px;height:1px;background:#a0a0a0;"></div>
<div style="left:74px;top:380.95px;width:11px;height:1px;background:#a0a0a0;"></div>
<svg style="position:absolute;left:71px;top:397.7px;" width="7" height="10" viewBox="0 0 7 10"><path d="M1 1 L6 5 L1 9 Z" fill="none" stroke="#888" stroke-width="1"/></svg>
<div style="left:79.5px;top:402.2px;width:5.5px;height:1px;background:#a0a0a0;"></div>
<div style="left:74px;top:436px;width:1px;height:9.199999999999989px;background:#a0a0a0;"></div>
<div style="left:74px;top:444.7px;width:11px;height:1px;background:#a0a0a0;"></div>
<svg style="position:absolute;left:25px;top:180.2px;" width="20" height="20" viewBox="0 0 20 20"><rect x="3" y="1" width="14" height="3" rx="1" fill="#7090a8" stroke="#222" stroke-width="1"/><path d="M10 4 V17 M5 8 V10 M15 8 V10 M5 8 H15" stroke="#222" stroke-width="1.2"/><ellipse cx="5" cy="11" rx="4" ry="2.5" fill="#40a060" stroke="#222" stroke-width="1"/><ellipse cx="15" cy="11" rx="4" ry="2.5" fill="#a0c040" stroke="#222" stroke-width="1"/><rect x="4" y="15" width="12" height="3.5" rx="1" fill="#40c8d0" stroke="#222" stroke-width="1"/></svg>
<svg style="position:absolute;left:46px;top:201.45px;" width="20" height="20" viewBox="0 0 20 20"><rect x="3" y="1" width="14" height="3" rx="1" fill="#7090a8" stroke="#222" stroke-width="1"/><path d="M10 4 V17 M5 8 V10 M15 8 V10 M5 8 H15" stroke="#222" stroke-width="1.2"/><ellipse cx="5" cy="11" rx="4" ry="2.5" fill="#40a060" stroke="#222" stroke-width="1"/><ellipse cx="15" cy="11" rx="4" ry="2.5" fill="#a0c040" stroke="#222" stroke-width="1"/><rect x="4" y="15" width="12" height="3.5" rx="1" fill="#40c8d0" stroke="#222" stroke-width="1"/></svg>
<svg style="position:absolute;left:67.5px;top:222.7px;" width="20" height="20" viewBox="0 0 20 20"><path d="M2 6 L5 2 H18 L16 6 Z" fill="#c0d0e0" stroke="#222" stroke-width="1.1"/><rect x="2" y="6" width="14" height="12" fill="#dfe8f2" stroke="#222" stroke-width="1.1"/><path d="M16 6 L18 2 V14 L16 18 Z" fill="#8aa0b8" stroke="#222" stroke-width="1.1"/><rect x="4" y="9" width="2" height="7" fill="#3070c0"/><path d="M9 9 V16 M12 9 V16" stroke="#506070" stroke-width="1.3"/></svg>
<svg style="position:absolute;left:88.5px;top:243.95px;" width="20" height="20" viewBox="0 0 20 20"><rect x="3" y="1" width="9" height="8" rx="1" fill="#c8e8e8" stroke="#333" stroke-width="1"/><rect x="1" y="9" width="13" height="3" fill="#50a0a0" stroke="#333" stroke-width="0.8"/><path d="M3 12 V17 H8 M12 5 H16 V11" stroke="#2060e0" stroke-width="1.3" fill="none"/><rect x="8" y="13" width="11" height="5" rx="2" fill="#d0d890" stroke="#333" stroke-width="1"/></svg>
<svg style="position:absolute;left:46px;top:265.2px;" width="20" height="21" viewBox="0 0 20 21"><circle cx="11" cy="13" r="7" fill="#3090a0" stroke="#333" stroke-width="1"/><path d="M6 10 Q11 14 9 19 M13 7 Q16 12 14 19" stroke="#d03070" stroke-width="1.5" fill="none"/><path d="M7 15 Q12 12 17 15" stroke="#40c040" stroke-width="1.5" fill="none"/><rect x="1" y="1" width="8" height="6" rx="1" fill="#f4e8ff" stroke="#9030f0" stroke-width="1.2"/><path d="M3 3 L5 5 L7 3" stroke="#e02060" fill="none"/></svg>
<svg style="position:absolute;left:46.5px;top:286.45px;" width="20" height="20" viewBox="0 0 20 20"><path d="M2 6 L5 2 H18 L16 6 Z" fill="#c0d0e0" stroke="#222" stroke-width="1.1"/><rect x="2" y="6" width="14" height="12" fill="#dfe8f2" stroke="#222" stroke-width="1.1"/><path d="M16 6 L18 2 V14 L16 18 Z" fill="#8aa0b8" stroke="#222" stroke-width="1.1"/><rect x="4" y="9" width="2" height="7" fill="#3070c0"/><path d="M9 9 V16 M12 9 V16" stroke="#506070" stroke-width="1.3"/></svg>
<svg style="position:absolute;left:67.5px;top:307.7px;" width="20" height="21" viewBox="0 0 20 21"><rect x="2" y="7" width="16" height="9" fill="#a8c8e8" stroke="#222" stroke-width="1.2"/><path d="M5 16 V19 M9 16 V19 M13 16 V19 M16 16 V19" stroke="#222" stroke-width="1.5"/><path d="M6 14 L15 9" stroke="#fff" stroke-width="1.5"/><rect x="1" y="1" width="8" height="6" rx="1" fill="#fff" stroke="#30b040" stroke-width="1.2"/><path d="M3 3 L5 5 L7 3" stroke="#e02060" fill="none"/></svg>
<svg style="position:absolute;left:68.5px;top:328.95px;" width="20" height="21" viewBox="0 0 20 21"><rect x="1" y="2" width="15" height="15" fill="#e8eef4" stroke="#222" stroke-width="1.3"/><path d="M8 11 V7 Q9 5 10 7 V10 Q11 9 12 10 Q13 9 14 11 Q16 11 16 13 V16 Q15 19 11 19 Q8 19 7 15 L6 12 Q7 11 8 13" fill="#f8d8b0" stroke="#333" stroke-width="0.9"/></svg>
<svg style="position:absolute;left:89px;top:350.2px;" width="20" height="20" viewBox="0 0 20 20"><path d="M1 4 V1 H4 M16 1 H19 V4 M1 16 V19 H4 M16 19 H19 V16" stroke="#20a020" stroke-width="1.3" fill="none"/><rect x="3" y="3" width="14" height="14" fill="#90a8c0" stroke="#222" stroke-width="1.3"/><rect x="5" y="5" width="10" height="10" fill="#dfe6ee"/><rect x="7" y="6" width="6" height="7" fill="#fff" stroke="#222"/></svg>
<svg style="position:absolute;left:89px;top:371.45px;" width="20" height="20" viewBox="0 0 20 20"><path d="M1 4 V1 H4 M16 1 H19 V4 M1 16 V19 H4 M16 19 H19 V16" stroke="#20a020" stroke-width="1.3" fill="none"/><rect x="3" y="3" width="14" height="14" fill="#90a8c0" stroke="#222" stroke-width="1.3"/><rect x="5" y="5" width="10" height="10" fill="#dfe6ee"/><path d="M5 5 L9 9" stroke="#e02050" stroke-width="1.5"/><rect x="10" y="7" width="5" height="6" fill="#fff" stroke="#222"/></svg>
<svg style="position:absolute;left:89px;top:392.7px;" width="20" height="20" viewBox="0 0 20 20"><path d="M1 4 V1 H4 M16 1 H19 V4 M1 16 V19 H4 M16 19 H19 V16" stroke="#20a020" stroke-width="1.3" fill="none"/><rect x="3" y="3" width="14" height="14" fill="#90a8c0" stroke="#222" stroke-width="1.3"/><rect x="5" y="5" width="10" height="10" fill="#dfe6ee"/><rect x="6" y="6" width="8" height="8" fill="#fff" stroke="#222"/><path d="M7 7 L13 13 M13 7 L7 13" stroke="#d02040"/></svg>
<svg style="position:absolute;left:68.5px;top:413.95px;" width="20" height="20" viewBox="0 0 20 20"><rect x="5" y="2" width="14" height="13" fill="#c8d8e8" stroke="#222" stroke-width="1.1"/><rect x="8" y="0.5" width="6" height="2.5" fill="#208050"/><rect x="1" y="5" width="14" height="14" fill="#b8d8e0" stroke="#222" stroke-width="1.2"/><path d="M5 12 Q5 8 9 8 H12 M10 6 L12 8 L10 10 M11 14 Q11 16 8 16 H6" stroke="#20a040" stroke-width="1.5" fill="none"/></svg>
<svg style="position:absolute;left:88.5px;top:435.2px;" width="20" height="20" viewBox="0 0 20 20"><rect x="1" y="4" width="17" height="15" fill="#fde8ec" stroke="#222" stroke-width="1.2"/><rect x="4" y="1.5" width="6" height="3" fill="#b03040"/><path d="M4 8 H15 M4 11.5 H15 M4 15 H15 M7 6 V17 M12 6 V17" stroke="#b08890" stroke-width="1"/></svg>
<div style="left:313px;top:178px;width:1px;height:390px;background:#e4e4e4;"></div>
<div style="left:0px;top:568.5px;width:314px;height:28.3px;background:#4d6082;"></div>
<div style="left:0px;top:568.5px;width:58px;height:28.3px;background:#ffffff;"></div>
<div style="left:8.30px;top:575.15px;font-size:14px;line-height:14px;color:#3a72c4;font-weight:normal;font-family:'Liberation Sans',sans-serif;white-space:nowrap;transform:scaleX(0.9868);transform-origin:0 0;">Project</div>
<div style="left:68.00px;top:575.15px;font-size:14px;line-height:14px;color:#e8ecf4;font-weight:normal;font-family:'Liberation Sans',sans-serif;white-space:nowrap;transform:scaleX(1.0358);transform-origin:0 0;">View High-speed Link</div>
<div style="left:224.00px;top:575.15px;font-size:14px;line-height:14px;color:#e8ecf4;font-weight:normal;font-family:'Liberation Sans',sans-serif;white-space:nowrap;transform:scaleX(0.9595);transform-origin:0 0;">View P2P</div>
<div style="left:0px;top:631.5px;width:314px;height:322px;background:#efefef;"></div>
<div style="left:0px;top:604.6px;width:314px;height:27.4px;background:#4d6082;"></div>
<div style="left:5.00px;top:612.15px;font-size:14px;line-height:14px;color:#ffffff;font-weight:normal;font-family:'Liberation Sans',sans-serif;white-space:nowrap;transform:scaleX(1.0467);transform-origin:0 0;">Function/FB</div>
<svg style="position:absolute;left:247px;top:617.5px;" width="12" height="8" viewBox="0 0 12 8"><path d="M0.5 0.5 H11.5 L6 7 Z" fill="#fff"/></svg>
<svg style="position:absolute;left:272px;top:613.0px;" width="10" height="14" viewBox="0 0 10 14"><path d="M2 1 H8 M3 1 V8 M7 1 V8 M1 8 H9 M5 8 V13" stroke="#fff" stroke-width="1.6" fill="none"/></svg>
<svg style="position:absolute;left:296px;top:614.5px;" width="10" height="10" viewBox="0 0 10 10"><path d="M1 1 L9 9 M9 1 L1 9" stroke="#fff" stroke-width="1.8"/></svg>
<div style="left:0px;top:634px;width:257.5px;height:24.5px;background:#f8f8f8;border-radius:2px;"></div>
<div style="left:4.50px;top:640.15px;font-size:14px;line-height:14px;color:#7a7a7a;font-weight:normal;font-family:'Liberation Sans',sans-serif;white-space:nowrap;transform:scaleX(0.9420);transform-origin:0 0;">Most Recently Used</div>
<svg style="position:absolute;left:240px;top:643px;" width="14" height="8" viewBox="0 0 14 8"><path d="M1 1 L7 7 L13 1" stroke="#a0a0a0" stroke-width="1.2" fill="none"/></svg>
<div style="left:263.5px;top:636px;width:47px;height:23.5px;background:#f8f8f8;border:1px solid #e6e6e6;border-radius:4px;box-sizing:border-box;"></div>
<div style="left:275.00px;top:641.15px;font-size:14px;line-height:14px;color:#7a7a7a;font-weight:normal;font-family:'Liberation Sans',sans-serif;white-space:nowrap;transform:scaleX(0.9534);transform-origin:0 0;">Edit</div>
<div style="left:0px;top:666px;width:310px;height:32px;background:#ffffff;border-top:2px solid #a8a8a8;border-left:2px solid #a8a8a8;border-right:1px solid #e0e0e0;box-sizing:border-box;"></div>
<div style="left:0px;top:666px;width:2px;height:287px;background:#a8a8a8;"></div>
<div style="left:9.00px;top:677.15px;font-size:14px;line-height:14px;color:#111;font-weight:normal;font-family:'Liberation Sans',sans-serif;white-space:nowrap;transform:scaleX(0.9375);transform-origin:0 0;">Function Name</div>
<div style="left:321px;top:176px;width:1559px;height:777px;background:#ffffff;"></div>
<svg style="position:absolute;left:321px;top:153.5px;" width="162" height="24" viewBox="0 0 162 24"><path d="M0 24 L23 0.5 H159 V24 Z" fill="#fff"/></svg>
<div style="left:363.00px;top:158.15px;font-size:14px;line-height:14px;color:#000;font-weight:bold;font-family:'Liberation Sans',sans-serif;white-space:nowrap;transform:scaleX(0.9843);transform-origin:0 0;">NewProgram</div>
<svg style="position:absolute;left:464px;top:161px;" width="10" height="10" viewBox="0 0 10 10"><path d="M1 1 L9 9 M9 1 L1 9" stroke="#6a6a6a" stroke-width="1.5"/></svg>
<div style="left:480px;top:154.5px;width:145px;height:21.5px;background:#cfd5e3;border-left:1.5px solid #8d97ab;box-sizing:border-box;"></div>
<div style="left:505.00px;top:158.15px;font-size:14px;line-height:14px;color:#222;font-weight:normal;font-family:'Liberation Sans',sans-serif;white-space:nowrap;">I/O Parameter</div>
<svg style="position:absolute;left:609.5px;top:161px;" width="10" height="10" viewBox="0 0 10 10"><path d="M1 1 L9 9 M9 1 L1 9" stroke="#6a6a6a" stroke-width="1.5"/></svg>
<div style="left:625px;top:154.5px;width:177px;height:21.5px;background:#cfd5e3;border-left:1.5px solid #8d97ab;box-sizing:border-box;border-top-right-radius:3px;"></div>
<div style="left:651.00px;top:158.15px;font-size:14px;line-height:14px;color:#222;font-weight:normal;font-family:'Liberation Sans',sans-serif;white-space:nowrap;transform:scaleX(1.0270);transform-origin:0 0;">Variable/Comment</div>
<svg style="position:absolute;left:476.5px;top:152.5px;" width="9" height="6" viewBox="0 0 9 6"><path d="M0 0 H9 L5 5.5 H4 Z" fill="#2b3a55"/></svg>
<svg style="position:absolute;left:621px;top:152.5px;" width="9" height="6" viewBox="0 0 9 6"><path d="M0 0 H9 L5 5.5 H4 Z" fill="#2b3a55"/></svg>
<div style="left:481px;top:175px;width:321px;height:1px;background:#c2c9d8;"></div>
<svg style="position:absolute;left:786.5px;top:161px;" width="10" height="10" viewBox="0 0 10 10"><path d="M1 1 L9 9 M9 1 L1 9" stroke="#6a6a6a" stroke-width="1.5"/></svg>
<div style="left:850.00px;top:152.30px;font-size:28px;line-height:28px;color:#ffffff;font-weight:normal;font-family:'Liberation Sans',sans-serif;white-space:nowrap;transform:scaleX(1.1064);transform-origin:0 0;">InstrumentationTools.com</div>
<svg style="position:absolute;left:1863px;top:161px;" width="12" height="8" viewBox="0 0 12 8"><path d="M0.5 0.5 H11.5 L6 7 Z" fill="#fff"/></svg>
<div style="left:321px;top:176px;width:1559.5px;height:777px;background:#ffffff;"></div>
<div style="left:328px;top:181px;width:1544.5px;height:2px;background:#8c8c8c;"></div>
<div style="left:328px;top:181px;width:2px;height:765px;background:#8c8c8c;"></div>
<div style="left:330px;top:183px;width:110px;height:740px;background:#efefef;"></div>
<div style="left:330px;top:308.0px;width:110px;height:1.8px;background:#a4a4a4;"></div>
<div style="left:330px;top:433.3px;width:110px;height:1.8px;background:#a4a4a4;"></div>
<div style="left:330px;top:507.7px;width:110px;height:1.8px;background:#a4a4a4;"></div>
<div style="left:330px;top:632.8px;width:110px;height:1.8px;background:#a4a4a4;"></div>
<div style="left:330px;top:758.3px;width:110px;height:1.8px;background:#a4a4a4;"></div>
<div style="left:330px;top:830.5px;width:110px;height:1.8px;background:#a4a4a4;"></div>
<div style="left:330px;top:923px;width:1521.5px;height:23px;background:#efefef;"></div>
<div style="left:351px;top:933.5px;width:1280px;height:2.2px;background:#8c8c8c;"></div>
<div style="left:1852.5px;top:183px;width:21px;height:740px;background:#efefef;"></div>
<div style="left:1852.5px;top:183px;width:18px;height:8px;background:#fafafa;"></div>
<div style="left:1870.3px;top:181px;width:2.2px;height:11.5px;background:#8c8c8c;"></div>
<div style="left:1852.5px;top:190.8px;width:20px;height:1.8px;background:#8c8c8c;"></div>
<div style="left:1861.2px;top:213px;width:2.6px;height:82px;background:#8c8c8c;"></div>
<svg style="position:absolute;left:0px;top:0px;pointer-events:none;" width="1920" height="991" viewBox="0 0 1920 991"><line x1="442.5" y1="184.0" x2="1792.5" y2="184.0" stroke="#ebebfc" stroke-width="1.3" stroke-dasharray="4 3.5"/><line x1="442.5" y1="310.2" x2="1792.5" y2="310.2" stroke="#ebebfc" stroke-width="1.3" stroke-dasharray="4 3.5"/><line x1="442.5" y1="435.5" x2="1792.5" y2="435.5" stroke="#ebebfc" stroke-width="1.3" stroke-dasharray="4 3.5"/><line x1="442.5" y1="509.9" x2="1792.5" y2="509.9" stroke="#ebebfc" stroke-width="1.3" stroke-dasharray="4 3.5"/><line x1="442.5" y1="635.0" x2="1792.5" y2="635.0" stroke="#ebebfc" stroke-width="1.3" stroke-dasharray="4 3.5"/><line x1="442.5" y1="760.5" x2="1792.5" y2="760.5" stroke="#ebebfc" stroke-width="1.3" stroke-dasharray="4 3.5"/><line x1="442.5" y1="832.7" x2="1792.5" y2="832.7" stroke="#ebebfc" stroke-width="1.3" stroke-dasharray="4 3.5"/><line x1="578" y1="183" x2="578" y2="923" stroke="#ebebfc" stroke-width="1.3" stroke-dasharray="3.5 4"/><line x1="713" y1="183" x2="713" y2="923" stroke="#ebebfc" stroke-width="1.3" stroke-dasharray="3.5 4"/><line x1="848" y1="183" x2="848" y2="923" stroke="#ebebfc" stroke-width="1.3" stroke-dasharray="3.5 4"/><line x1="983" y1="183" x2="983" y2="923" stroke="#ebebfc" stroke-width="1.3" stroke-dasharray="3.5 4"/><line x1="1118" y1="183" x2="1118" y2="923" stroke="#ebebfc" stroke-width="1.3" stroke-dasharray="3.5 4"/><line x1="1253" y1="183" x2="1253" y2="923" stroke="#ebebfc" stroke-width="1.3" stroke-dasharray="3.5 4"/><line x1="1388" y1="183" x2="1388" y2="923" stroke="#ebebfc" stroke-width="1.3" stroke-dasharray="3.5 4"/><line x1="1523" y1="183" x2="1523" y2="923" stroke="#ebebfc" stroke-width="1.3" stroke-dasharray="3.5 4"/><line x1="1658" y1="183" x2="1658" y2="923" stroke="#ebebfc" stroke-width="1.3" stroke-dasharray="3.5 4"/><line x1="442.5" y1="262.85" x2="497.0" y2="262.85" stroke="#5a5a5a" stroke-width="2"/><line x1="525.0" y1="262.85" x2="632.0" y2="262.85" stroke="#5a5a5a" stroke-width="2"/><line x1="660.0" y1="262.85" x2="1708.5" y2="262.85" stroke="#5a5a5a" stroke-width="2"/><line x1="1740.5" y1="262.85" x2="1792.5" y2="262.85" stroke="#5a5a5a" stroke-width="2"/><line x1="497.0" y1="250.85000000000002" x2="497.0" y2="274.85" stroke="#333" stroke-width="1.7"/><line x1="525.0" y1="250.85000000000002" x2="525.0" y2="274.85" stroke="#222" stroke-width="1.7"/><line x1="632.0" y1="250.85000000000002" x2="632.0" y2="274.85" stroke="#333" stroke-width="1.7"/><line x1="660.0" y1="250.85000000000002" x2="660.0" y2="274.85" stroke="#222" stroke-width="1.7"/><line x1="639.0" y1="274.85" x2="651.5" y2="252.35000000000002" stroke="#333" stroke-width="1.6"/><path d="M1714.5 253.85000000000002 Q1704.0 262.85 1714.5 271.85" stroke="#2a2a2a" stroke-width="1.6" fill="none"/><path d="M1734.5 253.85000000000002 Q1745.0 262.85 1734.5 271.85" stroke="#2a2a2a" stroke-width="1.6" fill="none"/><line x1="442.5" y1="388.4" x2="497.0" y2="388.4" stroke="#5a5a5a" stroke-width="2"/><line x1="525.0" y1="388.4" x2="578" y2="388.4" stroke="#5a5a5a" stroke-width="2"/><line x1="578" y1="262.85" x2="578" y2="389.4" stroke="#5a5a5a" stroke-width="2"/><line x1="497.0" y1="376.4" x2="497.0" y2="400.4" stroke="#333" stroke-width="1.7"/><line x1="525.0" y1="376.4" x2="525.0" y2="400.4" stroke="#222" stroke-width="1.7"/><line x1="442.5" y1="587.75" x2="497.0" y2="587.75" stroke="#5a5a5a" stroke-width="2"/><line x1="525.0" y1="587.75" x2="632.0" y2="587.75" stroke="#5a5a5a" stroke-width="2"/><line x1="660.0" y1="587.75" x2="767.0" y2="587.75" stroke="#5a5a5a" stroke-width="2"/><line x1="795.0" y1="587.75" x2="1708.5" y2="587.75" stroke="#5a5a5a" stroke-width="2"/><line x1="1740.5" y1="587.75" x2="1792.5" y2="587.75" stroke="#5a5a5a" stroke-width="2"/><line x1="497.0" y1="575.75" x2="497.0" y2="599.75" stroke="#333" stroke-width="1.7"/><line x1="525.0" y1="575.75" x2="525.0" y2="599.75" stroke="#222" stroke-width="1.7"/><line x1="632.0" y1="575.75" x2="632.0" y2="599.75" stroke="#333" stroke-width="1.7"/><line x1="660.0" y1="575.75" x2="660.0" y2="599.75" stroke="#222" stroke-width="1.7"/><line x1="767.0" y1="575.75" x2="767.0" y2="599.75" stroke="#333" stroke-width="1.7"/><line x1="795.0" y1="575.75" x2="795.0" y2="599.75" stroke="#222" stroke-width="1.7"/><path d="M1714.5 578.75 Q1704.0 587.75 1714.5 596.75" stroke="#2a2a2a" stroke-width="1.6" fill="none"/><path d="M1734.5 578.75 Q1745.0 587.75 1734.5 596.75" stroke="#2a2a2a" stroke-width="1.6" fill="none"/><line x1="578" y1="712.8" x2="632.0" y2="712.8" stroke="#5a5a5a" stroke-width="2"/><line x1="660.0" y1="712.8" x2="1708.5" y2="712.8" stroke="#5a5a5a" stroke-width="2"/><line x1="1740.5" y1="712.8" x2="1792.5" y2="712.8" stroke="#5a5a5a" stroke-width="2"/><line x1="578" y1="587.75" x2="578" y2="713.8" stroke="#5a5a5a" stroke-width="2"/><line x1="632.0" y1="700.8" x2="632.0" y2="724.8" stroke="#333" stroke-width="1.7"/><line x1="660.0" y1="700.8" x2="660.0" y2="724.8" stroke="#222" stroke-width="1.7"/><path d="M1714.5 703.8 Q1704.0 712.8 1714.5 721.8" stroke="#2a2a2a" stroke-width="1.6" fill="none"/><path d="M1734.5 703.8 Q1745.0 712.8 1734.5 721.8" stroke="#2a2a2a" stroke-width="1.6" fill="none"/><line x1="442.5" y1="911.5" x2="497.0" y2="911.5" stroke="#5a5a5a" stroke-width="2"/><line x1="525.0" y1="911.5" x2="632.0" y2="911.5" stroke="#5a5a5a" stroke-width="2"/><line x1="660.0" y1="911.5" x2="767.0" y2="911.5" stroke="#5a5a5a" stroke-width="2"/><line x1="795.0" y1="911.5" x2="1708.5" y2="911.5" stroke="#5a5a5a" stroke-width="2"/><line x1="1740.5" y1="911.5" x2="1792.5" y2="911.5" stroke="#5a5a5a" stroke-width="2"/><line x1="578" y1="911.5" x2="578" y2="923" stroke="#5a5a5a" stroke-width="2"/><line x1="497.0" y1="899.5" x2="497.0" y2="923.5" stroke="#333" stroke-width="1.7"/><line x1="525.0" y1="899.5" x2="525.0" y2="923.5" stroke="#222" stroke-width="1.7"/><line x1="632.0" y1="899.5" x2="632.0" y2="923.5" stroke="#333" stroke-width="1.7"/><line x1="660.0" y1="899.5" x2="660.0" y2="923.5" stroke="#222" stroke-width="1.7"/><line x1="767.0" y1="899.5" x2="767.0" y2="923.5" stroke="#333" stroke-width="1.7"/><line x1="795.0" y1="899.5" x2="795.0" y2="923.5" stroke="#222" stroke-width="1.7"/><path d="M1714.5 902.5 Q1704.0 911.5 1714.5 920.5" stroke="#2a2a2a" stroke-width="1.6" fill="none"/><path d="M1734.5 902.5 Q1745.0 911.5 1734.5 920.5" stroke="#2a2a2a" stroke-width="1.6" fill="none"/></svg>
<div style="left:440px;top:183px;width:2.6px;height:740px;background:#000;"></div>
<div style="left:1792.5px;top:183px;width:2.5px;height:740px;background:#000;"></div>
<div style="left:481.83px;top:228.26px;font-size:18px;line-height:18px;color:#2b2bff;font-weight:normal;font-family:'Liberation Sans',sans-serif;white-space:nowrap;transform:scaleX(0.9650);transform-origin:50% 0;-webkit-text-stroke:0.25px currentColor;">START</div>
<div style="left:484.47px;top:279.56px;font-size:18px;line-height:18px;color:#1e1e1e;font-weight:normal;font-family:'Liberation Sans',sans-serif;white-space:nowrap;transform:scaleX(0.9600);transform-origin:50% 0;-webkit-text-stroke:0.25px currentColor;">P0000</div>
<div style="left:621.16px;top:228.26px;font-size:18px;line-height:18px;color:#2b2bff;font-weight:normal;font-family:'Liberation Sans',sans-serif;white-space:nowrap;transform:scaleX(0.9650);transform-origin:50% 0;-webkit-text-stroke:0.25px currentColor;">STOP</div>
<div style="left:619.47px;top:279.56px;font-size:18px;line-height:18px;color:#1e1e1e;font-weight:normal;font-family:'Liberation Sans',sans-serif;white-space:nowrap;transform:scaleX(0.9600);transform-origin:50% 0;-webkit-text-stroke:0.25px currentColor;">P0001</div>
<div style="left:1675.49px;top:207.06px;font-size:18px;line-height:18px;color:#2b2bff;font-weight:normal;font-family:'Liberation Sans',sans-serif;white-space:nowrap;transform:scaleX(0.9650);transform-origin:50% 0;-webkit-text-stroke:0.25px currentColor;">SYSTEM_O</div>
<div style="left:1718.00px;top:228.26px;font-size:18px;line-height:18px;color:#2b2bff;font-weight:normal;font-family:'Liberation Sans',sans-serif;white-space:nowrap;transform:scaleX(0.9650);transform-origin:50% 0;-webkit-text-stroke:0.25px currentColor;">N</div>
<div style="left:1696.98px;top:279.56px;font-size:18px;line-height:18px;color:#1e1e1e;font-weight:normal;font-family:'Liberation Sans',sans-serif;white-space:nowrap;transform:scaleX(0.9600);transform-origin:50% 0;-webkit-text-stroke:0.25px currentColor;">M0000</div>
<div style="left:461.49px;top:332.61px;font-size:18px;line-height:18px;color:#2b2bff;font-weight:normal;font-family:'Liberation Sans',sans-serif;white-space:nowrap;transform:scaleX(0.9650);transform-origin:50% 0;-webkit-text-stroke:0.25px currentColor;">SYSTEM_O</div>
<div style="left:504.00px;top:353.81px;font-size:18px;line-height:18px;color:#2b2bff;font-weight:normal;font-family:'Liberation Sans',sans-serif;white-space:nowrap;transform:scaleX(0.9650);transform-origin:50% 0;-webkit-text-stroke:0.25px currentColor;">N</div>
<div style="left:482.98px;top:405.11px;font-size:18px;line-height:18px;color:#1e1e1e;font-weight:normal;font-family:'Liberation Sans',sans-serif;white-space:nowrap;transform:scaleX(0.9600);transform-origin:50% 0;-webkit-text-stroke:0.25px currentColor;">M0000</div>
<div style="left:420.99px;top:290.76px;font-size:18px;line-height:18px;color:#2b2bff;font-weight:normal;font-family:'Liberation Sans',sans-serif;white-space:nowrap;-webkit-text-stroke:0.25px currentColor;">0</div>
<div style="left:348.50px;top:463.16px;font-size:18px;line-height:18px;color:#2a9a2a;font-weight:normal;font-family:'Liberation Sans',sans-serif;white-space:nowrap;transform:scaleX(0.9484);transform-origin:0 0;-webkit-text-stroke:0.25px currentColor;">Comment</div>
<div style="left:443.30px;top:463.16px;font-size:18px;line-height:18px;color:#2a9a2a;font-weight:normal;font-family:'Liberation Sans',sans-serif;white-space:nowrap;transform:scaleX(0.9357);transform-origin:0 0;-webkit-text-stroke:0.25px currentColor;">FLOOR-1</div>
<div style="left:461.49px;top:531.96px;font-size:18px;line-height:18px;color:#2b2bff;font-weight:normal;font-family:'Liberation Sans',sans-serif;white-space:nowrap;transform:scaleX(0.9650);transform-origin:50% 0;-webkit-text-stroke:0.25px currentColor;">SYSTEM_O</div>
<div style="left:504.00px;top:553.16px;font-size:18px;line-height:18px;color:#2b2bff;font-weight:normal;font-family:'Liberation Sans',sans-serif;white-space:nowrap;transform:scaleX(0.9650);transform-origin:50% 0;-webkit-text-stroke:0.25px currentColor;">N</div>
<div style="left:482.98px;top:604.46px;font-size:18px;line-height:18px;color:#1e1e1e;font-weight:normal;font-family:'Liberation Sans',sans-serif;white-space:nowrap;transform:scaleX(0.9600);transform-origin:50% 0;-webkit-text-stroke:0.25px currentColor;">M0000</div>
<div style="left:598.48px;top:531.96px;font-size:18px;line-height:18px;color:#2b2bff;font-weight:normal;font-family:'Liberation Sans',sans-serif;white-space:nowrap;transform:scaleX(0.9650);transform-origin:50% 0;-webkit-text-stroke:0.25px currentColor;">LS_FLOOR</div>
<div style="left:640.49px;top:553.16px;font-size:18px;line-height:18px;color:#2b2bff;font-weight:normal;font-family:'Liberation Sans',sans-serif;white-space:nowrap;transform:scaleX(0.9650);transform-origin:50% 0;-webkit-text-stroke:0.25px currentColor;">1</div>
<div style="left:619.47px;top:604.46px;font-size:18px;line-height:18px;color:#1e1e1e;font-weight:normal;font-family:'Liberation Sans',sans-serif;white-space:nowrap;transform:scaleX(0.9600);transform-origin:50% 0;-webkit-text-stroke:0.25px currentColor;">P0002</div>
<div style="left:735.48px;top:531.96px;font-size:18px;line-height:18px;color:#2b2bff;font-weight:normal;font-family:'Liberation Sans',sans-serif;white-space:nowrap;transform:scaleX(0.9650);transform-origin:50% 0;-webkit-text-stroke:0.25px currentColor;">PB_UP_FL</div>
<div style="left:754.99px;top:553.16px;font-size:18px;line-height:18px;color:#2b2bff;font-weight:normal;font-family:'Liberation Sans',sans-serif;white-space:nowrap;transform:scaleX(0.9650);transform-origin:50% 0;-webkit-text-stroke:0.25px currentColor;">OOR2</div>
<div style="left:754.47px;top:604.46px;font-size:18px;line-height:18px;color:#1e1e1e;font-weight:normal;font-family:'Liberation Sans',sans-serif;white-space:nowrap;transform:scaleX(0.9600);transform-origin:50% 0;-webkit-text-stroke:0.25px currentColor;">P0003</div>
<div style="left:1677.99px;top:531.96px;font-size:18px;line-height:18px;color:#2b2bff;font-weight:normal;font-family:'Liberation Sans',sans-serif;white-space:nowrap;transform:scaleX(0.9650);transform-origin:50% 0;-webkit-text-stroke:0.25px currentColor;">FLOOR1_T</div>
<div style="left:1707.49px;top:553.16px;font-size:18px;line-height:18px;color:#2b2bff;font-weight:normal;font-family:'Liberation Sans',sans-serif;white-space:nowrap;transform:scaleX(0.9650);transform-origin:50% 0;-webkit-text-stroke:0.25px currentColor;">O_2</div>
<div style="left:1698.47px;top:604.46px;font-size:18px;line-height:18px;color:#1e1e1e;font-weight:normal;font-family:'Liberation Sans',sans-serif;white-space:nowrap;transform:scaleX(0.9600);transform-origin:50% 0;-webkit-text-stroke:0.25px currentColor;">P0040</div>
<div style="left:420.99px;top:615.46px;font-size:18px;line-height:18px;color:#2b2bff;font-weight:normal;font-family:'Liberation Sans',sans-serif;white-space:nowrap;-webkit-text-stroke:0.25px currentColor;">5</div>
<div style="left:598.48px;top:657.01px;font-size:18px;line-height:18px;color:#2b2bff;font-weight:normal;font-family:'Liberation Sans',sans-serif;white-space:nowrap;transform:scaleX(0.9650);transform-origin:50% 0;-webkit-text-stroke:0.25px currentColor;">LS_FLOOR</div>
<div style="left:640.49px;top:678.21px;font-size:18px;line-height:18px;color:#2b2bff;font-weight:normal;font-family:'Liberation Sans',sans-serif;white-space:nowrap;transform:scaleX(0.9650);transform-origin:50% 0;-webkit-text-stroke:0.25px currentColor;">2</div>
<div style="left:619.47px;top:729.51px;font-size:18px;line-height:18px;color:#1e1e1e;font-weight:normal;font-family:'Liberation Sans',sans-serif;white-space:nowrap;transform:scaleX(0.9600);transform-origin:50% 0;-webkit-text-stroke:0.25px currentColor;">P0004</div>
<div style="left:1677.99px;top:657.01px;font-size:18px;line-height:18px;color:#2b2bff;font-weight:normal;font-family:'Liberation Sans',sans-serif;white-space:nowrap;transform:scaleX(0.9650);transform-origin:50% 0;-webkit-text-stroke:0.25px currentColor;">FLOOR1_T</div>
<div style="left:1707.49px;top:678.21px;font-size:18px;line-height:18px;color:#2b2bff;font-weight:normal;font-family:'Liberation Sans',sans-serif;white-space:nowrap;transform:scaleX(0.9650);transform-origin:50% 0;-webkit-text-stroke:0.25px currentColor;">O_2</div>
<div style="left:1698.47px;top:729.51px;font-size:18px;line-height:18px;color:#1e1e1e;font-weight:normal;font-family:'Liberation Sans',sans-serif;white-space:nowrap;transform:scaleX(0.9600);transform-origin:50% 0;-webkit-text-stroke:0.25px currentColor;">P0040</div>
<div style="left:639.50px;top:704.31px;font-size:18px;line-height:18px;color:#222;font-weight:normal;font-family:'Liberation Sans',sans-serif;white-space:nowrap;-webkit-text-stroke:0.25px currentColor;">P</div>
<div style="left:1718.50px;top:579.26px;font-size:18px;line-height:18px;color:#222;font-weight:normal;font-family:'Liberation Sans',sans-serif;white-space:nowrap;transform:scaleX(0.8329);transform-origin:50% 0;-webkit-text-stroke:0.25px currentColor;">S</div>
<div style="left:1718.00px;top:704.31px;font-size:18px;line-height:18px;color:#222;font-weight:normal;font-family:'Liberation Sans',sans-serif;white-space:nowrap;transform:scaleX(0.8462);transform-origin:50% 0;-webkit-text-stroke:0.25px currentColor;">R</div>
<div style="left:348.50px;top:787.06px;font-size:18px;line-height:18px;color:#2a9a2a;font-weight:normal;font-family:'Liberation Sans',sans-serif;white-space:nowrap;transform:scaleX(0.9484);transform-origin:0 0;-webkit-text-stroke:0.25px currentColor;">Comment</div>
<div style="left:443.30px;top:787.06px;font-size:18px;line-height:18px;color:#2a9a2a;font-weight:normal;font-family:'Liberation Sans',sans-serif;white-space:nowrap;transform:scaleX(0.9742);transform-origin:0 0;-webkit-text-stroke:0.25px currentColor;">FLOOR-2</div>
<div style="left:461.49px;top:855.71px;font-size:18px;line-height:18px;color:#2b2bff;font-weight:normal;font-family:'Liberation Sans',sans-serif;white-space:nowrap;transform:scaleX(0.9650);transform-origin:50% 0;-webkit-text-stroke:0.25px currentColor;">SYSTEM_O</div>
<div style="left:504.00px;top:876.91px;font-size:18px;line-height:18px;color:#2b2bff;font-weight:normal;font-family:'Liberation Sans',sans-serif;white-space:nowrap;transform:scaleX(0.9650);transform-origin:50% 0;-webkit-text-stroke:0.25px currentColor;">N</div>
<div style="left:598.48px;top:855.71px;font-size:18px;line-height:18px;color:#2b2bff;font-weight:normal;font-family:'Liberation Sans',sans-serif;white-space:nowrap;transform:scaleX(0.9650);transform-origin:50% 0;-webkit-text-stroke:0.25px currentColor;">LS_FLOOR</div>
<div style="left:640.49px;top:876.91px;font-size:18px;line-height:18px;color:#2b2bff;font-weight:normal;font-family:'Liberation Sans',sans-serif;white-space:nowrap;transform:scaleX(0.9650);transform-origin:50% 0;-webkit-text-stroke:0.25px currentColor;">2</div>
<div style="left:735.48px;top:855.71px;font-size:18px;line-height:18px;color:#2b2bff;font-weight:normal;font-family:'Liberation Sans',sans-serif;white-space:nowrap;transform:scaleX(0.9650);transform-origin:50% 0;-webkit-text-stroke:0.25px currentColor;">PB_UP_FL</div>
<div style="left:754.99px;top:876.91px;font-size:18px;line-height:18px;color:#2b2bff;font-weight:normal;font-family:'Liberation Sans',sans-serif;white-space:nowrap;transform:scaleX(0.9650);transform-origin:50% 0;-webkit-text-stroke:0.25px currentColor;">OOR3</div>
<div style="left:1677.99px;top:855.71px;font-size:18px;line-height:18px;color:#2b2bff;font-weight:normal;font-family:'Liberation Sans',sans-serif;white-space:nowrap;transform:scaleX(0.9650);transform-origin:50% 0;-webkit-text-stroke:0.25px currentColor;">FLOOR2_T</div>
<div style="left:1707.49px;top:876.91px;font-size:18px;line-height:18px;color:#2b2bff;font-weight:normal;font-family:'Liberation Sans',sans-serif;white-space:nowrap;transform:scaleX(0.9650);transform-origin:50% 0;-webkit-text-stroke:0.25px currentColor;">O_3</div>
<div style="left:1718.50px;top:903.01px;font-size:18px;line-height:18px;color:#222;font-weight:normal;font-family:'Liberation Sans',sans-serif;white-space:nowrap;transform:scaleX(0.8329);transform-origin:50% 0;-webkit-text-stroke:0.25px currentColor;">S</div>
<div style="left:330px;top:923px;width:1521.5px;height:1.4px;background:#ffffff;"></div>
<div style="left:330px;top:924.4px;width:1521.5px;height:21.6px;background:#efefef;"></div>
<div style="left:351px;top:933.5px;width:1280px;height:2.2px;background:#8c8c8c;"></div>
<div style="left:321px;top:946px;width:1559.5px;height:7px;background:#ffffff;"></div>
<div style="left:0px;top:989px;width:1920px;height:2px;background:#0a78d0;"></div>
<div style="left:11.60px;top:961.53px;font-size:14.5px;line-height:14.5px;color:#e6eaf2;font-weight:normal;font-family:'Liberation Sans',sans-serif;white-space:nowrap;transform:scaleX(0.9776);transform-origin:0 0;">Find 2</div>
<div style="left:8.8px;top:982.3px;width:42.2px;height:7px;background:#4d6082;"></div>
<div style="left:60.40px;top:961.53px;font-size:14.5px;line-height:14.5px;color:#e6eaf2;font-weight:normal;font-family:'Liberation Sans',sans-serif;white-space:nowrap;">Communication</div>
<div style="left:57.6px;top:982.3px;width:103.4px;height:7px;background:#4d6082;"></div>
<div style="left:170.60px;top:961.53px;font-size:14.5px;line-height:14.5px;color:#e6eaf2;font-weight:normal;font-family:'Liberation Sans',sans-serif;white-space:nowrap;transform:scaleX(0.9320);transform-origin:0 0;">Cross Reference</div>
<div style="left:167.4px;top:982.3px;width:104.9px;height:7px;background:#4d6082;"></div>
<div style="left:281.60px;top:961.53px;font-size:14.5px;line-height:14.5px;color:#e6eaf2;font-weight:normal;font-family:'Liberation Sans',sans-serif;white-space:nowrap;transform:scaleX(0.9355);transform-origin:0 0;">Used Device</div>
<div style="left:278.8px;top:982.3px;width:79.69999999999999px;height:7px;background:#4d6082;"></div>
<div style="left:368.20px;top:961.53px;font-size:14.5px;line-height:14.5px;color:#e6eaf2;font-weight:normal;font-family:'Liberation Sans',sans-serif;white-space:nowrap;">Duplicate Coil</div>
<div style="left:365px;top:982.3px;width:92.5px;height:7px;background:#4d6082;"></div>
<div style="left:485.40px;top:961.53px;font-size:14.5px;line-height:14.5px;color:#e6eaf2;font-weight:normal;font-family:'Liberation Sans',sans-serif;white-space:nowrap;transform:scaleX(1.0357);transform-origin:0 0;">Monitor 1</div>
<div style="left:482.3px;top:982.3px;width:66.69999999999999px;height:7px;background:#4d6082;"></div>
<div style="left:557.80px;top:961.53px;font-size:14.5px;line-height:14.5px;color:#e6eaf2;font-weight:normal;font-family:'Liberation Sans',sans-serif;white-space:nowrap;transform:scaleX(1.0423);transform-origin:0 0;">Monitor 2</div>
<div style="left:554.7px;top:982.3px;width:66.29999999999995px;height:7px;background:#4d6082;"></div>
<div style="left:630.20px;top:961.53px;font-size:14.5px;line-height:14.5px;color:#e6eaf2;font-weight:normal;font-family:'Liberation Sans',sans-serif;white-space:nowrap;transform:scaleX(1.0514);transform-origin:0 0;">Monitor 4</div>
<div style="left:627.3px;top:982.3px;width:66.70000000000005px;height:7px;background:#4d6082;"></div>
<div style="left:1912.5px;top:159.7px;width:7.5px;height:106px;background:#4d6082;"></div>
<div style="left:1912.5px;top:271.5px;width:7.5px;height:114.5px;background:#4d6082;"></div>
<div style="left:1903.75px;top:162.50px;font-size:15.5px;line-height:15.5px;color:#e6eaf2;font-family:'Liberation Sans',sans-serif;white-space:nowrap;transform-origin:0 0;transform:rotate(90deg) scaleX(0.9673);">System catalog</div>
<div style="left:1903.75px;top:275.50px;font-size:15.5px;line-height:15.5px;color:#e6eaf2;font-family:'Liberation Sans',sans-serif;white-space:nowrap;transform-origin:0 0;transform:rotate(90deg) scaleX(0.9720);">EDS information</div>
<div style="left:1786.4px;top:849.8px;width:117.6px;height:118px;background:radial-gradient(circle closest-side at 50% 50%, #e41c40 0%, #de1b3d 40%, #c91834 62%, #a01227 82%, #720b1b 100%);border-radius:50%;"></div>
<div style="left:1820.50px;top:873.02px;font-size:34px;line-height:34px;color:#ffffff;font-weight:normal;font-family:'Liberation Serif',serif;white-space:nowrap;transform:scaleX(1.1275);transform-origin:50% 0;-webkit-text-stroke:1.1px #fff;">Inst</div>
<div style="left:1807.66px;top:909.82px;font-size:34px;line-height:34px;color:#ffffff;font-weight:normal;font-family:'Liberation Serif',serif;white-space:nowrap;transform:scaleX(1.0457);transform-origin:50% 0;-webkit-text-stroke:1.1px #fff;">Tools</div>
</body></html>
